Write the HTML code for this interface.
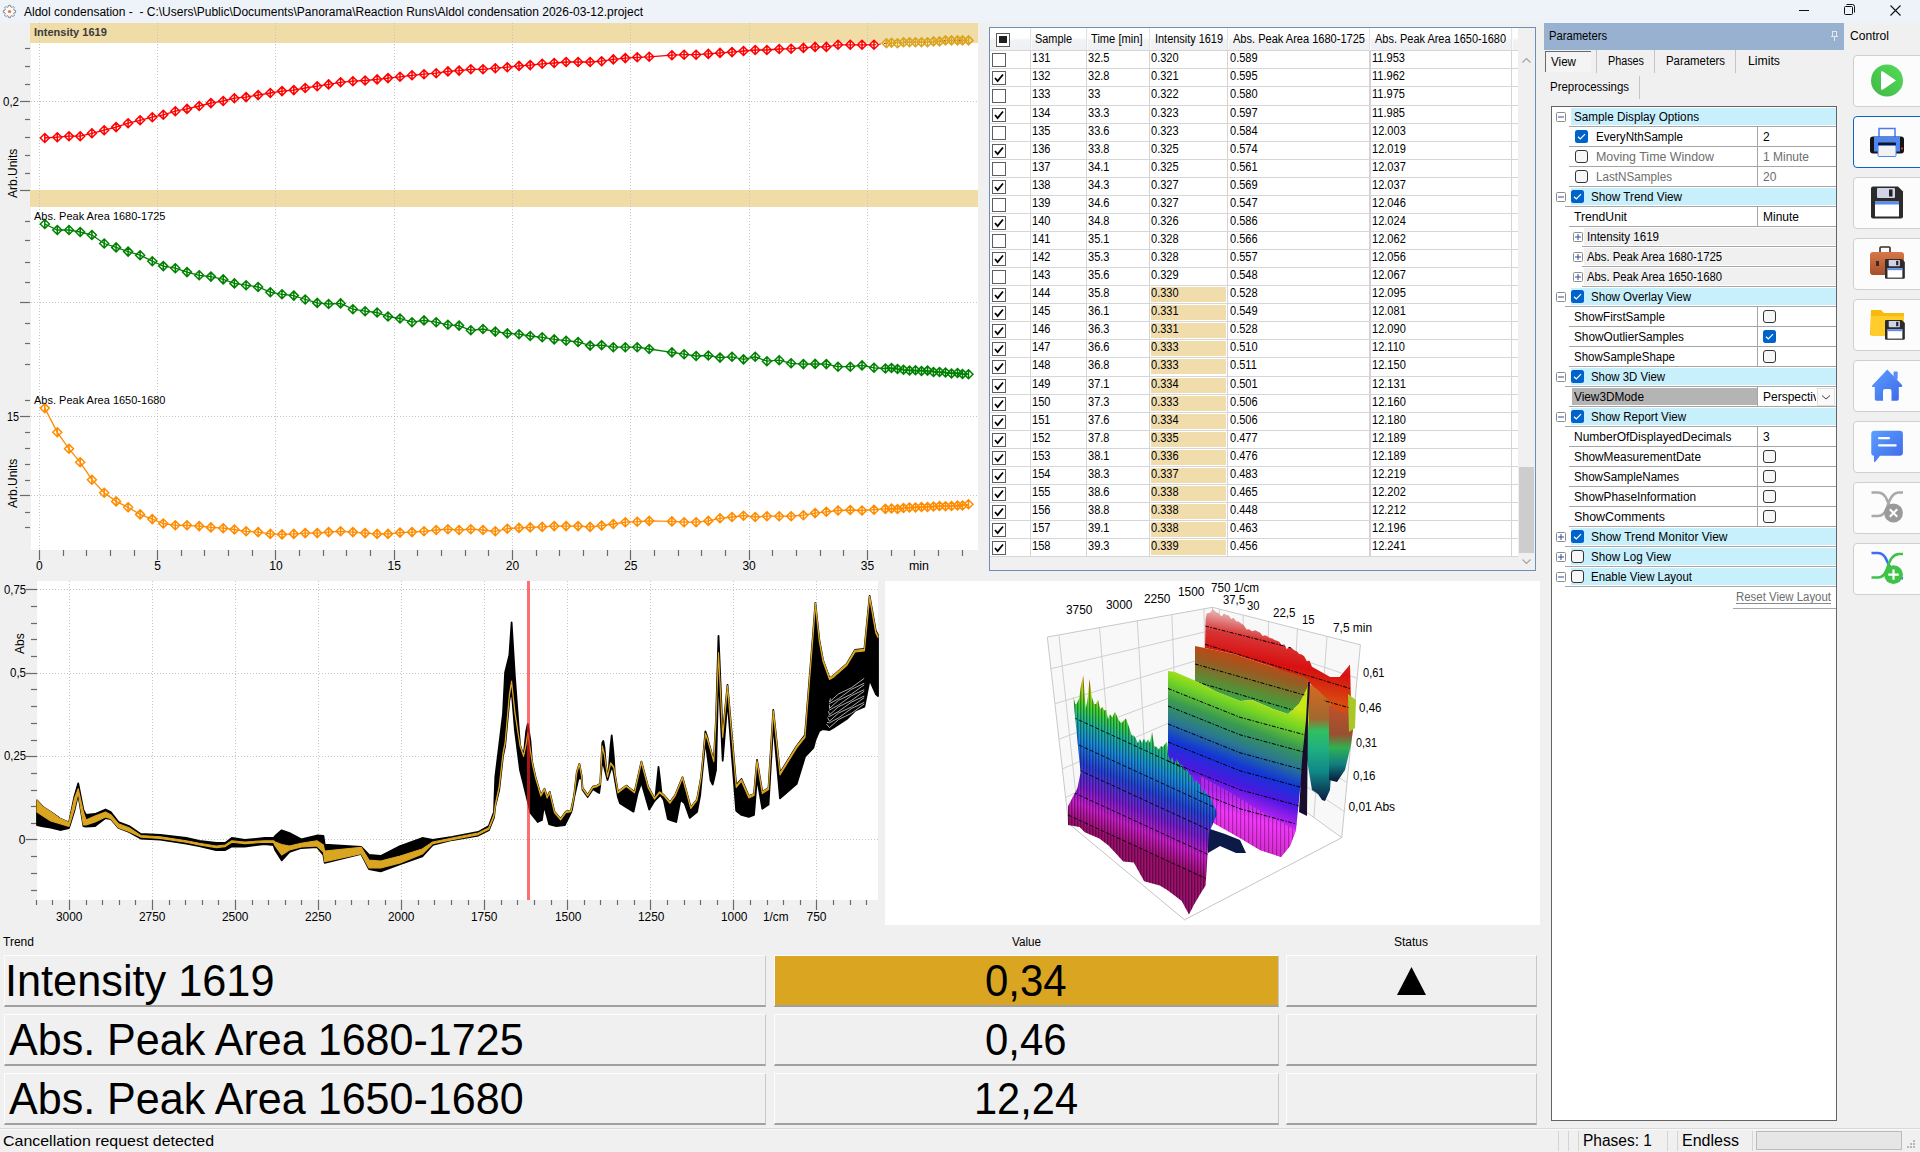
<!DOCTYPE html>
<html><head><meta charset="utf-8"><title>Aldol condensation</title>
<style>
html,body{margin:0;padding:0;width:1920px;height:1152px;overflow:hidden;background:#f0f0f0;font-family:"Liberation Sans",sans-serif;}
.b{position:absolute;}
.t{position:absolute;white-space:pre;line-height:1;font-family:"Liberation Sans",sans-serif;}
svg.b{overflow:visible;}
</style></head><body>
<div class="b" style="left:0.00px;top:0.00px;width:1920.00px;height:23.00px;background:#eef2f9"></div><svg class="b" style="left:2px;top:3.5px" width="15" height="15" viewBox="0 0 15 15"><path d="M13.60 6.39 L13.60 8.61 L12.29 8.53 L11.62 10.16 L12.60 11.03 L11.03 12.60 L10.16 11.62 L8.53 12.29 L8.61 13.60 L6.39 13.60 L6.47 12.29 L4.84 11.62 L3.97 12.60 L2.40 11.03 L3.38 10.16 L2.71 8.53 L1.40 8.61 L1.40 6.39 L2.71 6.47 L3.38 4.84 L2.40 3.97 L3.97 2.40 L4.84 3.38 L6.47 2.71 L6.39 1.40 L8.61 1.40 L8.53 2.71 L10.16 3.38 L11.03 2.40 L12.60 3.97 L11.62 4.84 L12.29 6.47 Z" fill="#fafafa" stroke="#8a8a8a" stroke-width="1"/><circle cx="7.5" cy="7.5" r="1.6" fill="#e8703a"/></svg><div class="t" style="left:24.00px;top:5.84px;font-size:12.00px;color:#000;">Aldol condensation -  - C:\Users\Public\Documents\Panorama\Reaction Runs\Aldol condensation 2026-03-12.project</div><svg class="b" style="left:1790px;top:0px" width="130" height="23" viewBox="0 0 130 23"><line x1="9" y1="10.5" x2="19" y2="10.5" stroke="#111" stroke-width="1"/><rect x="54.5" y="6.5" width="8" height="8" rx="1" fill="none" stroke="#111" stroke-width="1"/><path d="M56.5 4.5 h6 a2 2 0 0 1 2 2 v6" fill="none" stroke="#111" stroke-width="1"/><path d="M100.5 5.5 L110.5 15.5 M110.5 5.5 L100.5 15.5" stroke="#111" stroke-width="1.1"/></svg>
<div class="b" style="left:31.00px;top:23.00px;width:947.00px;height:527.00px;background:#fff"></div><div class="b" style="left:30.00px;top:23.00px;width:948.00px;height:20.00px;background:#f0dca7"></div><div class="b" style="left:30.00px;top:190.00px;width:948.00px;height:17.00px;background:#f0dca7"></div><svg class="b" style="left:0;top:0" width="980" height="580"><line x1="39.5" y1="23" x2="39.5" y2="550" stroke="#c4c4c4" stroke-width="1" stroke-dasharray="1 2"/><line x1="157.5" y1="23" x2="157.5" y2="550" stroke="#c4c4c4" stroke-width="1" stroke-dasharray="1 2"/><line x1="275.5" y1="23" x2="275.5" y2="550" stroke="#c4c4c4" stroke-width="1" stroke-dasharray="1 2"/><line x1="394.5" y1="23" x2="394.5" y2="550" stroke="#c4c4c4" stroke-width="1" stroke-dasharray="1 2"/><line x1="512.5" y1="23" x2="512.5" y2="550" stroke="#c4c4c4" stroke-width="1" stroke-dasharray="1 2"/><line x1="630.5" y1="23" x2="630.5" y2="550" stroke="#c4c4c4" stroke-width="1" stroke-dasharray="1 2"/><line x1="749.5" y1="23" x2="749.5" y2="550" stroke="#c4c4c4" stroke-width="1" stroke-dasharray="1 2"/><line x1="867.5" y1="23" x2="867.5" y2="550" stroke="#c4c4c4" stroke-width="1" stroke-dasharray="1 2"/><line x1="31" y1="101.5" x2="978" y2="101.5" stroke="#c4c4c4" stroke-width="1" stroke-dasharray="1 2"/><line x1="31" y1="302.5" x2="978" y2="302.5" stroke="#c4c4c4" stroke-width="1" stroke-dasharray="1 2"/><line x1="31" y1="416.5" x2="978" y2="416.5" stroke="#c4c4c4" stroke-width="1" stroke-dasharray="1 2"/><line x1="31" y1="495.5" x2="978" y2="495.5" stroke="#c4c4c4" stroke-width="1" stroke-dasharray="1 2"/><line x1="25" y1="48.5" x2="30" y2="48.5" stroke="#6a6a6a" stroke-width="1.2"/><line x1="25" y1="66.5" x2="30" y2="66.5" stroke="#6a6a6a" stroke-width="1.2"/><line x1="25" y1="84.5" x2="30" y2="84.5" stroke="#6a6a6a" stroke-width="1.2"/><line x1="25" y1="119.5" x2="30" y2="119.5" stroke="#6a6a6a" stroke-width="1.2"/><line x1="25" y1="137.5" x2="30" y2="137.5" stroke="#6a6a6a" stroke-width="1.2"/><line x1="25" y1="155.5" x2="30" y2="155.5" stroke="#6a6a6a" stroke-width="1.2"/><line x1="25" y1="173.5" x2="30" y2="173.5" stroke="#6a6a6a" stroke-width="1.2"/><line x1="25" y1="221.5" x2="30" y2="221.5" stroke="#6a6a6a" stroke-width="1.2"/><line x1="25" y1="240.5" x2="30" y2="240.5" stroke="#6a6a6a" stroke-width="1.2"/><line x1="25" y1="262.5" x2="30" y2="262.5" stroke="#6a6a6a" stroke-width="1.2"/><line x1="25" y1="282.5" x2="30" y2="282.5" stroke="#6a6a6a" stroke-width="1.2"/><line x1="25" y1="323.5" x2="30" y2="323.5" stroke="#6a6a6a" stroke-width="1.2"/><line x1="25" y1="343.5" x2="30" y2="343.5" stroke="#6a6a6a" stroke-width="1.2"/><line x1="25" y1="364.5" x2="30" y2="364.5" stroke="#6a6a6a" stroke-width="1.2"/><line x1="25" y1="400.5" x2="30" y2="400.5" stroke="#6a6a6a" stroke-width="1.2"/><line x1="25" y1="432.5" x2="30" y2="432.5" stroke="#6a6a6a" stroke-width="1.2"/><line x1="25" y1="448.5" x2="30" y2="448.5" stroke="#6a6a6a" stroke-width="1.2"/><line x1="25" y1="464.5" x2="30" y2="464.5" stroke="#6a6a6a" stroke-width="1.2"/><line x1="25" y1="480.5" x2="30" y2="480.5" stroke="#6a6a6a" stroke-width="1.2"/><line x1="25" y1="512.5" x2="30" y2="512.5" stroke="#6a6a6a" stroke-width="1.2"/><line x1="25" y1="527.5" x2="30" y2="527.5" stroke="#6a6a6a" stroke-width="1.2"/><line x1="20" y1="101.5" x2="30" y2="101.5" stroke="#6a6a6a" stroke-width="1.2"/><line x1="20" y1="190.5" x2="30" y2="190.5" stroke="#6a6a6a" stroke-width="1.2"/><line x1="20" y1="302.5" x2="30" y2="302.5" stroke="#6a6a6a" stroke-width="1.2"/><line x1="20" y1="416.5" x2="30" y2="416.5" stroke="#6a6a6a" stroke-width="1.2"/><line x1="20" y1="495.5" x2="30" y2="495.5" stroke="#6a6a6a" stroke-width="1.2"/><line x1="39.5" y1="550" x2="39.5" y2="560" stroke="#6a6a6a" stroke-width="1.2"/><line x1="63.5" y1="550" x2="63.5" y2="556" stroke="#6a6a6a" stroke-width="1.2"/><line x1="86.5" y1="550" x2="86.5" y2="556" stroke="#6a6a6a" stroke-width="1.2"/><line x1="110.5" y1="550" x2="110.5" y2="556" stroke="#6a6a6a" stroke-width="1.2"/><line x1="134.5" y1="550" x2="134.5" y2="556" stroke="#6a6a6a" stroke-width="1.2"/><line x1="157.5" y1="550" x2="157.5" y2="560" stroke="#6a6a6a" stroke-width="1.2"/><line x1="181.5" y1="550" x2="181.5" y2="556" stroke="#6a6a6a" stroke-width="1.2"/><line x1="204.5" y1="550" x2="204.5" y2="556" stroke="#6a6a6a" stroke-width="1.2"/><line x1="228.5" y1="550" x2="228.5" y2="556" stroke="#6a6a6a" stroke-width="1.2"/><line x1="252.5" y1="550" x2="252.5" y2="556" stroke="#6a6a6a" stroke-width="1.2"/><line x1="275.5" y1="550" x2="275.5" y2="560" stroke="#6a6a6a" stroke-width="1.2"/><line x1="299.5" y1="550" x2="299.5" y2="556" stroke="#6a6a6a" stroke-width="1.2"/><line x1="323.5" y1="550" x2="323.5" y2="556" stroke="#6a6a6a" stroke-width="1.2"/><line x1="346.5" y1="550" x2="346.5" y2="556" stroke="#6a6a6a" stroke-width="1.2"/><line x1="370.5" y1="550" x2="370.5" y2="556" stroke="#6a6a6a" stroke-width="1.2"/><line x1="394.5" y1="550" x2="394.5" y2="560" stroke="#6a6a6a" stroke-width="1.2"/><line x1="417.5" y1="550" x2="417.5" y2="556" stroke="#6a6a6a" stroke-width="1.2"/><line x1="441.5" y1="550" x2="441.5" y2="556" stroke="#6a6a6a" stroke-width="1.2"/><line x1="465.5" y1="550" x2="465.5" y2="556" stroke="#6a6a6a" stroke-width="1.2"/><line x1="488.5" y1="550" x2="488.5" y2="556" stroke="#6a6a6a" stroke-width="1.2"/><line x1="512.5" y1="550" x2="512.5" y2="560" stroke="#6a6a6a" stroke-width="1.2"/><line x1="536.5" y1="550" x2="536.5" y2="556" stroke="#6a6a6a" stroke-width="1.2"/><line x1="559.5" y1="550" x2="559.5" y2="556" stroke="#6a6a6a" stroke-width="1.2"/><line x1="583.5" y1="550" x2="583.5" y2="556" stroke="#6a6a6a" stroke-width="1.2"/><line x1="607.5" y1="550" x2="607.5" y2="556" stroke="#6a6a6a" stroke-width="1.2"/><line x1="630.5" y1="550" x2="630.5" y2="560" stroke="#6a6a6a" stroke-width="1.2"/><line x1="654.5" y1="550" x2="654.5" y2="556" stroke="#6a6a6a" stroke-width="1.2"/><line x1="678.5" y1="550" x2="678.5" y2="556" stroke="#6a6a6a" stroke-width="1.2"/><line x1="701.5" y1="550" x2="701.5" y2="556" stroke="#6a6a6a" stroke-width="1.2"/><line x1="725.5" y1="550" x2="725.5" y2="556" stroke="#6a6a6a" stroke-width="1.2"/><line x1="749.5" y1="550" x2="749.5" y2="560" stroke="#6a6a6a" stroke-width="1.2"/><line x1="772.5" y1="550" x2="772.5" y2="556" stroke="#6a6a6a" stroke-width="1.2"/><line x1="796.5" y1="550" x2="796.5" y2="556" stroke="#6a6a6a" stroke-width="1.2"/><line x1="820.5" y1="550" x2="820.5" y2="556" stroke="#6a6a6a" stroke-width="1.2"/><line x1="843.5" y1="550" x2="843.5" y2="556" stroke="#6a6a6a" stroke-width="1.2"/><line x1="867.5" y1="550" x2="867.5" y2="560" stroke="#6a6a6a" stroke-width="1.2"/><line x1="891.5" y1="550" x2="891.5" y2="556" stroke="#6a6a6a" stroke-width="1.2"/><line x1="914.5" y1="550" x2="914.5" y2="556" stroke="#6a6a6a" stroke-width="1.2"/><line x1="938.5" y1="550" x2="938.5" y2="556" stroke="#6a6a6a" stroke-width="1.2"/><line x1="962.5" y1="550" x2="962.5" y2="556" stroke="#6a6a6a" stroke-width="1.2"/><polyline points="44.8,138.0 57.3,137.2 69.0,136.2 80.2,136.2 91.9,133.3 104.2,130.2 116.1,127.1 128.1,123.2 140.1,120.3 152.3,117.2 163.3,114.8 175.3,111.2 187.0,108.9 199.2,106.0 210.9,103.1 223.2,101.0 234.4,98.2 246.1,97.1 258.1,95.1 270.3,93.0 282.0,91.1 293.8,90.1 305.2,88.0 317.2,86.2 328.6,84.4 340.6,82.3 352.9,81.2 365.1,80.5 377.1,79.4 388.0,78.1 400.0,76.8 412.0,75.3 424.0,74.2 436.2,73.2 447.9,71.4 459.1,70.6 470.8,69.3 483.0,69.3 495.3,68.2 507.3,67.2 519.0,65.9 530.2,65.1 542.2,63.8 554.2,63.0 566.1,62.0 578.1,62.0 590.1,62.0 601.6,61.2 613.3,59.4 625.3,58.1 637.2,57.3 649.2,56.8 671.9,55.2 684.1,54.7 696.1,54.7 708.3,53.9 720.0,52.9 732.0,52.1 743.5,51.0 755.2,50.0 766.9,50.0 779.2,49.0 791.1,48.7 803.4,47.9 815.1,46.9 826.3,46.9 838.0,44.8 850.3,44.8 862.0,44.8 874.0,44.8" fill="none" stroke="#ff0000" stroke-width="1.3"/><path d="M44.8 133.5 l4.5 4.5 l-4.5 4.5 l-4.5 -4.5 z M44.8 133.5 v9" fill="none" stroke="#ff0000" stroke-width="1.5"/><path d="M57.3 132.7 l4.5 4.5 l-4.5 4.5 l-4.5 -4.5 z M57.3 132.7 v9" fill="none" stroke="#ff0000" stroke-width="1.5"/><path d="M69.0 131.7 l4.5 4.5 l-4.5 4.5 l-4.5 -4.5 z M69.0 131.7 v9" fill="none" stroke="#ff0000" stroke-width="1.5"/><path d="M80.2 131.7 l4.5 4.5 l-4.5 4.5 l-4.5 -4.5 z M80.2 131.7 v9" fill="none" stroke="#ff0000" stroke-width="1.5"/><path d="M91.9 128.8 l4.5 4.5 l-4.5 4.5 l-4.5 -4.5 z M91.9 128.8 v9" fill="none" stroke="#ff0000" stroke-width="1.5"/><path d="M104.2 125.7 l4.5 4.5 l-4.5 4.5 l-4.5 -4.5 z M104.2 125.7 v9" fill="none" stroke="#ff0000" stroke-width="1.5"/><path d="M116.1 122.6 l4.5 4.5 l-4.5 4.5 l-4.5 -4.5 z M116.1 122.6 v9" fill="none" stroke="#ff0000" stroke-width="1.5"/><path d="M128.1 118.7 l4.5 4.5 l-4.5 4.5 l-4.5 -4.5 z M128.1 118.7 v9" fill="none" stroke="#ff0000" stroke-width="1.5"/><path d="M140.1 115.8 l4.5 4.5 l-4.5 4.5 l-4.5 -4.5 z M140.1 115.8 v9" fill="none" stroke="#ff0000" stroke-width="1.5"/><path d="M152.3 112.7 l4.5 4.5 l-4.5 4.5 l-4.5 -4.5 z M152.3 112.7 v9" fill="none" stroke="#ff0000" stroke-width="1.5"/><path d="M163.3 110.3 l4.5 4.5 l-4.5 4.5 l-4.5 -4.5 z M163.3 110.3 v9" fill="none" stroke="#ff0000" stroke-width="1.5"/><path d="M175.3 106.7 l4.5 4.5 l-4.5 4.5 l-4.5 -4.5 z M175.3 106.7 v9" fill="none" stroke="#ff0000" stroke-width="1.5"/><path d="M187.0 104.4 l4.5 4.5 l-4.5 4.5 l-4.5 -4.5 z M187.0 104.4 v9" fill="none" stroke="#ff0000" stroke-width="1.5"/><path d="M199.2 101.5 l4.5 4.5 l-4.5 4.5 l-4.5 -4.5 z M199.2 101.5 v9" fill="none" stroke="#ff0000" stroke-width="1.5"/><path d="M210.9 98.6 l4.5 4.5 l-4.5 4.5 l-4.5 -4.5 z M210.9 98.6 v9" fill="none" stroke="#ff0000" stroke-width="1.5"/><path d="M223.2 96.5 l4.5 4.5 l-4.5 4.5 l-4.5 -4.5 z M223.2 96.5 v9" fill="none" stroke="#ff0000" stroke-width="1.5"/><path d="M234.4 93.7 l4.5 4.5 l-4.5 4.5 l-4.5 -4.5 z M234.4 93.7 v9" fill="none" stroke="#ff0000" stroke-width="1.5"/><path d="M246.1 92.6 l4.5 4.5 l-4.5 4.5 l-4.5 -4.5 z M246.1 92.6 v9" fill="none" stroke="#ff0000" stroke-width="1.5"/><path d="M258.1 90.6 l4.5 4.5 l-4.5 4.5 l-4.5 -4.5 z M258.1 90.6 v9" fill="none" stroke="#ff0000" stroke-width="1.5"/><path d="M270.3 88.5 l4.5 4.5 l-4.5 4.5 l-4.5 -4.5 z M270.3 88.5 v9" fill="none" stroke="#ff0000" stroke-width="1.5"/><path d="M282.0 86.6 l4.5 4.5 l-4.5 4.5 l-4.5 -4.5 z M282.0 86.6 v9" fill="none" stroke="#ff0000" stroke-width="1.5"/><path d="M293.8 85.6 l4.5 4.5 l-4.5 4.5 l-4.5 -4.5 z M293.8 85.6 v9" fill="none" stroke="#ff0000" stroke-width="1.5"/><path d="M305.2 83.5 l4.5 4.5 l-4.5 4.5 l-4.5 -4.5 z M305.2 83.5 v9" fill="none" stroke="#ff0000" stroke-width="1.5"/><path d="M317.2 81.7 l4.5 4.5 l-4.5 4.5 l-4.5 -4.5 z M317.2 81.7 v9" fill="none" stroke="#ff0000" stroke-width="1.5"/><path d="M328.6 79.9 l4.5 4.5 l-4.5 4.5 l-4.5 -4.5 z M328.6 79.9 v9" fill="none" stroke="#ff0000" stroke-width="1.5"/><path d="M340.6 77.8 l4.5 4.5 l-4.5 4.5 l-4.5 -4.5 z M340.6 77.8 v9" fill="none" stroke="#ff0000" stroke-width="1.5"/><path d="M352.9 76.8 l4.5 4.5 l-4.5 4.5 l-4.5 -4.5 z M352.9 76.8 v9" fill="none" stroke="#ff0000" stroke-width="1.5"/><path d="M365.1 76.0 l4.5 4.5 l-4.5 4.5 l-4.5 -4.5 z M365.1 76.0 v9" fill="none" stroke="#ff0000" stroke-width="1.5"/><path d="M377.1 74.9 l4.5 4.5 l-4.5 4.5 l-4.5 -4.5 z M377.1 74.9 v9" fill="none" stroke="#ff0000" stroke-width="1.5"/><path d="M388.0 73.6 l4.5 4.5 l-4.5 4.5 l-4.5 -4.5 z M388.0 73.6 v9" fill="none" stroke="#ff0000" stroke-width="1.5"/><path d="M400.0 72.3 l4.5 4.5 l-4.5 4.5 l-4.5 -4.5 z M400.0 72.3 v9" fill="none" stroke="#ff0000" stroke-width="1.5"/><path d="M412.0 70.8 l4.5 4.5 l-4.5 4.5 l-4.5 -4.5 z M412.0 70.8 v9" fill="none" stroke="#ff0000" stroke-width="1.5"/><path d="M424.0 69.7 l4.5 4.5 l-4.5 4.5 l-4.5 -4.5 z M424.0 69.7 v9" fill="none" stroke="#ff0000" stroke-width="1.5"/><path d="M436.2 68.7 l4.5 4.5 l-4.5 4.5 l-4.5 -4.5 z M436.2 68.7 v9" fill="none" stroke="#ff0000" stroke-width="1.5"/><path d="M447.9 66.9 l4.5 4.5 l-4.5 4.5 l-4.5 -4.5 z M447.9 66.9 v9" fill="none" stroke="#ff0000" stroke-width="1.5"/><path d="M459.1 66.1 l4.5 4.5 l-4.5 4.5 l-4.5 -4.5 z M459.1 66.1 v9" fill="none" stroke="#ff0000" stroke-width="1.5"/><path d="M470.8 64.8 l4.5 4.5 l-4.5 4.5 l-4.5 -4.5 z M470.8 64.8 v9" fill="none" stroke="#ff0000" stroke-width="1.5"/><path d="M483.0 64.8 l4.5 4.5 l-4.5 4.5 l-4.5 -4.5 z M483.0 64.8 v9" fill="none" stroke="#ff0000" stroke-width="1.5"/><path d="M495.3 63.7 l4.5 4.5 l-4.5 4.5 l-4.5 -4.5 z M495.3 63.7 v9" fill="none" stroke="#ff0000" stroke-width="1.5"/><path d="M507.3 62.7 l4.5 4.5 l-4.5 4.5 l-4.5 -4.5 z M507.3 62.7 v9" fill="none" stroke="#ff0000" stroke-width="1.5"/><path d="M519.0 61.4 l4.5 4.5 l-4.5 4.5 l-4.5 -4.5 z M519.0 61.4 v9" fill="none" stroke="#ff0000" stroke-width="1.5"/><path d="M530.2 60.6 l4.5 4.5 l-4.5 4.5 l-4.5 -4.5 z M530.2 60.6 v9" fill="none" stroke="#ff0000" stroke-width="1.5"/><path d="M542.2 59.3 l4.5 4.5 l-4.5 4.5 l-4.5 -4.5 z M542.2 59.3 v9" fill="none" stroke="#ff0000" stroke-width="1.5"/><path d="M554.2 58.5 l4.5 4.5 l-4.5 4.5 l-4.5 -4.5 z M554.2 58.5 v9" fill="none" stroke="#ff0000" stroke-width="1.5"/><path d="M566.1 57.5 l4.5 4.5 l-4.5 4.5 l-4.5 -4.5 z M566.1 57.5 v9" fill="none" stroke="#ff0000" stroke-width="1.5"/><path d="M578.1 57.5 l4.5 4.5 l-4.5 4.5 l-4.5 -4.5 z M578.1 57.5 v9" fill="none" stroke="#ff0000" stroke-width="1.5"/><path d="M590.1 57.5 l4.5 4.5 l-4.5 4.5 l-4.5 -4.5 z M590.1 57.5 v9" fill="none" stroke="#ff0000" stroke-width="1.5"/><path d="M601.6 56.7 l4.5 4.5 l-4.5 4.5 l-4.5 -4.5 z M601.6 56.7 v9" fill="none" stroke="#ff0000" stroke-width="1.5"/><path d="M613.3 54.9 l4.5 4.5 l-4.5 4.5 l-4.5 -4.5 z M613.3 54.9 v9" fill="none" stroke="#ff0000" stroke-width="1.5"/><path d="M625.3 53.6 l4.5 4.5 l-4.5 4.5 l-4.5 -4.5 z M625.3 53.6 v9" fill="none" stroke="#ff0000" stroke-width="1.5"/><path d="M637.2 52.8 l4.5 4.5 l-4.5 4.5 l-4.5 -4.5 z M637.2 52.8 v9" fill="none" stroke="#ff0000" stroke-width="1.5"/><path d="M649.2 52.3 l4.5 4.5 l-4.5 4.5 l-4.5 -4.5 z M649.2 52.3 v9" fill="none" stroke="#ff0000" stroke-width="1.5"/><path d="M671.9 50.7 l4.5 4.5 l-4.5 4.5 l-4.5 -4.5 z M671.9 50.7 v9" fill="none" stroke="#ff0000" stroke-width="1.5"/><path d="M684.1 50.2 l4.5 4.5 l-4.5 4.5 l-4.5 -4.5 z M684.1 50.2 v9" fill="none" stroke="#ff0000" stroke-width="1.5"/><path d="M696.1 50.2 l4.5 4.5 l-4.5 4.5 l-4.5 -4.5 z M696.1 50.2 v9" fill="none" stroke="#ff0000" stroke-width="1.5"/><path d="M708.3 49.4 l4.5 4.5 l-4.5 4.5 l-4.5 -4.5 z M708.3 49.4 v9" fill="none" stroke="#ff0000" stroke-width="1.5"/><path d="M720.0 48.4 l4.5 4.5 l-4.5 4.5 l-4.5 -4.5 z M720.0 48.4 v9" fill="none" stroke="#ff0000" stroke-width="1.5"/><path d="M732.0 47.6 l4.5 4.5 l-4.5 4.5 l-4.5 -4.5 z M732.0 47.6 v9" fill="none" stroke="#ff0000" stroke-width="1.5"/><path d="M743.5 46.5 l4.5 4.5 l-4.5 4.5 l-4.5 -4.5 z M743.5 46.5 v9" fill="none" stroke="#ff0000" stroke-width="1.5"/><path d="M755.2 45.5 l4.5 4.5 l-4.5 4.5 l-4.5 -4.5 z M755.2 45.5 v9" fill="none" stroke="#ff0000" stroke-width="1.5"/><path d="M766.9 45.5 l4.5 4.5 l-4.5 4.5 l-4.5 -4.5 z M766.9 45.5 v9" fill="none" stroke="#ff0000" stroke-width="1.5"/><path d="M779.2 44.5 l4.5 4.5 l-4.5 4.5 l-4.5 -4.5 z M779.2 44.5 v9" fill="none" stroke="#ff0000" stroke-width="1.5"/><path d="M791.1 44.2 l4.5 4.5 l-4.5 4.5 l-4.5 -4.5 z M791.1 44.2 v9" fill="none" stroke="#ff0000" stroke-width="1.5"/><path d="M803.4 43.4 l4.5 4.5 l-4.5 4.5 l-4.5 -4.5 z M803.4 43.4 v9" fill="none" stroke="#ff0000" stroke-width="1.5"/><path d="M815.1 42.4 l4.5 4.5 l-4.5 4.5 l-4.5 -4.5 z M815.1 42.4 v9" fill="none" stroke="#ff0000" stroke-width="1.5"/><path d="M826.3 42.4 l4.5 4.5 l-4.5 4.5 l-4.5 -4.5 z M826.3 42.4 v9" fill="none" stroke="#ff0000" stroke-width="1.5"/><path d="M838.0 40.3 l4.5 4.5 l-4.5 4.5 l-4.5 -4.5 z M838.0 40.3 v9" fill="none" stroke="#ff0000" stroke-width="1.5"/><path d="M850.3 40.3 l4.5 4.5 l-4.5 4.5 l-4.5 -4.5 z M850.3 40.3 v9" fill="none" stroke="#ff0000" stroke-width="1.5"/><path d="M862.0 40.3 l4.5 4.5 l-4.5 4.5 l-4.5 -4.5 z M862.0 40.3 v9" fill="none" stroke="#ff0000" stroke-width="1.5"/><path d="M874.0 40.3 l4.5 4.5 l-4.5 4.5 l-4.5 -4.5 z M874.0 40.3 v9" fill="none" stroke="#ff0000" stroke-width="1.5"/><polyline points="44.8,224.0 57.3,230.0 69.0,230.0 80.2,232.0 91.9,235.0 104.2,243.5 116.1,247.4 128.1,251.6 140.1,255.2 152.3,261.2 163.3,266.1 175.3,268.2 187.0,272.1 199.2,275.3 210.9,276.6 223.2,279.4 234.4,283.4 246.1,285.2 258.1,287.0 270.3,292.2 282.0,294.3 293.8,295.6 305.2,299.5 317.2,302.9 328.6,304.0 340.6,303.4 352.9,309.2 365.1,311.2 377.1,312.5 388.0,316.5 400.0,318.5 412.0,322.2 424.0,320.4 436.2,322.2 447.9,324.8 459.1,325.6 470.8,330.3 483.0,329.0 495.3,331.6 507.3,333.4 519.0,334.2 530.2,336.0 542.2,337.3 554.2,339.4 566.1,340.7 578.1,342.0 590.1,345.6 601.6,345.1 613.3,347.2 625.3,347.2 637.2,347.2 649.2,349.0 671.9,352.4 684.1,354.2 696.1,356.0 708.3,355.5 720.0,357.6 732.0,356.8 743.5,359.4 755.2,356.8 766.9,361.2 779.2,360.2 791.1,363.3 803.4,364.1 815.1,363.9 826.3,364.1 838.0,366.7 850.3,366.7 862.0,365.4 874.0,367.8 885.4,368.5 891.5,368.0 897.5,369.0 903.5,369.8 909.5,370.5 915.5,370.3 921.5,371.0 927.5,370.6 933.5,372.0 939.5,372.0 945.5,372.5 951.5,373.5 957.5,373.0 962.5,374.0 968.5,374.3" fill="none" stroke="#008000" stroke-width="1.3"/><path d="M44.8 219.5 l4.5 4.5 l-4.5 4.5 l-4.5 -4.5 z M44.8 219.5 v9" fill="none" stroke="#008000" stroke-width="1.5"/><path d="M57.3 225.5 l4.5 4.5 l-4.5 4.5 l-4.5 -4.5 z M57.3 225.5 v9" fill="none" stroke="#008000" stroke-width="1.5"/><path d="M69.0 225.5 l4.5 4.5 l-4.5 4.5 l-4.5 -4.5 z M69.0 225.5 v9" fill="none" stroke="#008000" stroke-width="1.5"/><path d="M80.2 227.5 l4.5 4.5 l-4.5 4.5 l-4.5 -4.5 z M80.2 227.5 v9" fill="none" stroke="#008000" stroke-width="1.5"/><path d="M91.9 230.5 l4.5 4.5 l-4.5 4.5 l-4.5 -4.5 z M91.9 230.5 v9" fill="none" stroke="#008000" stroke-width="1.5"/><path d="M104.2 239.0 l4.5 4.5 l-4.5 4.5 l-4.5 -4.5 z M104.2 239.0 v9" fill="none" stroke="#008000" stroke-width="1.5"/><path d="M116.1 242.9 l4.5 4.5 l-4.5 4.5 l-4.5 -4.5 z M116.1 242.9 v9" fill="none" stroke="#008000" stroke-width="1.5"/><path d="M128.1 247.1 l4.5 4.5 l-4.5 4.5 l-4.5 -4.5 z M128.1 247.1 v9" fill="none" stroke="#008000" stroke-width="1.5"/><path d="M140.1 250.7 l4.5 4.5 l-4.5 4.5 l-4.5 -4.5 z M140.1 250.7 v9" fill="none" stroke="#008000" stroke-width="1.5"/><path d="M152.3 256.7 l4.5 4.5 l-4.5 4.5 l-4.5 -4.5 z M152.3 256.7 v9" fill="none" stroke="#008000" stroke-width="1.5"/><path d="M163.3 261.6 l4.5 4.5 l-4.5 4.5 l-4.5 -4.5 z M163.3 261.6 v9" fill="none" stroke="#008000" stroke-width="1.5"/><path d="M175.3 263.7 l4.5 4.5 l-4.5 4.5 l-4.5 -4.5 z M175.3 263.7 v9" fill="none" stroke="#008000" stroke-width="1.5"/><path d="M187.0 267.6 l4.5 4.5 l-4.5 4.5 l-4.5 -4.5 z M187.0 267.6 v9" fill="none" stroke="#008000" stroke-width="1.5"/><path d="M199.2 270.8 l4.5 4.5 l-4.5 4.5 l-4.5 -4.5 z M199.2 270.8 v9" fill="none" stroke="#008000" stroke-width="1.5"/><path d="M210.9 272.1 l4.5 4.5 l-4.5 4.5 l-4.5 -4.5 z M210.9 272.1 v9" fill="none" stroke="#008000" stroke-width="1.5"/><path d="M223.2 274.9 l4.5 4.5 l-4.5 4.5 l-4.5 -4.5 z M223.2 274.9 v9" fill="none" stroke="#008000" stroke-width="1.5"/><path d="M234.4 278.9 l4.5 4.5 l-4.5 4.5 l-4.5 -4.5 z M234.4 278.9 v9" fill="none" stroke="#008000" stroke-width="1.5"/><path d="M246.1 280.7 l4.5 4.5 l-4.5 4.5 l-4.5 -4.5 z M246.1 280.7 v9" fill="none" stroke="#008000" stroke-width="1.5"/><path d="M258.1 282.5 l4.5 4.5 l-4.5 4.5 l-4.5 -4.5 z M258.1 282.5 v9" fill="none" stroke="#008000" stroke-width="1.5"/><path d="M270.3 287.7 l4.5 4.5 l-4.5 4.5 l-4.5 -4.5 z M270.3 287.7 v9" fill="none" stroke="#008000" stroke-width="1.5"/><path d="M282.0 289.8 l4.5 4.5 l-4.5 4.5 l-4.5 -4.5 z M282.0 289.8 v9" fill="none" stroke="#008000" stroke-width="1.5"/><path d="M293.8 291.1 l4.5 4.5 l-4.5 4.5 l-4.5 -4.5 z M293.8 291.1 v9" fill="none" stroke="#008000" stroke-width="1.5"/><path d="M305.2 295.0 l4.5 4.5 l-4.5 4.5 l-4.5 -4.5 z M305.2 295.0 v9" fill="none" stroke="#008000" stroke-width="1.5"/><path d="M317.2 298.4 l4.5 4.5 l-4.5 4.5 l-4.5 -4.5 z M317.2 298.4 v9" fill="none" stroke="#008000" stroke-width="1.5"/><path d="M328.6 299.5 l4.5 4.5 l-4.5 4.5 l-4.5 -4.5 z M328.6 299.5 v9" fill="none" stroke="#008000" stroke-width="1.5"/><path d="M340.6 298.9 l4.5 4.5 l-4.5 4.5 l-4.5 -4.5 z M340.6 298.9 v9" fill="none" stroke="#008000" stroke-width="1.5"/><path d="M352.9 304.7 l4.5 4.5 l-4.5 4.5 l-4.5 -4.5 z M352.9 304.7 v9" fill="none" stroke="#008000" stroke-width="1.5"/><path d="M365.1 306.8 l4.5 4.5 l-4.5 4.5 l-4.5 -4.5 z M365.1 306.8 v9" fill="none" stroke="#008000" stroke-width="1.5"/><path d="M377.1 308.0 l4.5 4.5 l-4.5 4.5 l-4.5 -4.5 z M377.1 308.0 v9" fill="none" stroke="#008000" stroke-width="1.5"/><path d="M388.0 312.0 l4.5 4.5 l-4.5 4.5 l-4.5 -4.5 z M388.0 312.0 v9" fill="none" stroke="#008000" stroke-width="1.5"/><path d="M400.0 314.0 l4.5 4.5 l-4.5 4.5 l-4.5 -4.5 z M400.0 314.0 v9" fill="none" stroke="#008000" stroke-width="1.5"/><path d="M412.0 317.7 l4.5 4.5 l-4.5 4.5 l-4.5 -4.5 z M412.0 317.7 v9" fill="none" stroke="#008000" stroke-width="1.5"/><path d="M424.0 315.9 l4.5 4.5 l-4.5 4.5 l-4.5 -4.5 z M424.0 315.9 v9" fill="none" stroke="#008000" stroke-width="1.5"/><path d="M436.2 317.7 l4.5 4.5 l-4.5 4.5 l-4.5 -4.5 z M436.2 317.7 v9" fill="none" stroke="#008000" stroke-width="1.5"/><path d="M447.9 320.3 l4.5 4.5 l-4.5 4.5 l-4.5 -4.5 z M447.9 320.3 v9" fill="none" stroke="#008000" stroke-width="1.5"/><path d="M459.1 321.1 l4.5 4.5 l-4.5 4.5 l-4.5 -4.5 z M459.1 321.1 v9" fill="none" stroke="#008000" stroke-width="1.5"/><path d="M470.8 325.8 l4.5 4.5 l-4.5 4.5 l-4.5 -4.5 z M470.8 325.8 v9" fill="none" stroke="#008000" stroke-width="1.5"/><path d="M483.0 324.5 l4.5 4.5 l-4.5 4.5 l-4.5 -4.5 z M483.0 324.5 v9" fill="none" stroke="#008000" stroke-width="1.5"/><path d="M495.3 327.1 l4.5 4.5 l-4.5 4.5 l-4.5 -4.5 z M495.3 327.1 v9" fill="none" stroke="#008000" stroke-width="1.5"/><path d="M507.3 328.9 l4.5 4.5 l-4.5 4.5 l-4.5 -4.5 z M507.3 328.9 v9" fill="none" stroke="#008000" stroke-width="1.5"/><path d="M519.0 329.7 l4.5 4.5 l-4.5 4.5 l-4.5 -4.5 z M519.0 329.7 v9" fill="none" stroke="#008000" stroke-width="1.5"/><path d="M530.2 331.5 l4.5 4.5 l-4.5 4.5 l-4.5 -4.5 z M530.2 331.5 v9" fill="none" stroke="#008000" stroke-width="1.5"/><path d="M542.2 332.8 l4.5 4.5 l-4.5 4.5 l-4.5 -4.5 z M542.2 332.8 v9" fill="none" stroke="#008000" stroke-width="1.5"/><path d="M554.2 334.9 l4.5 4.5 l-4.5 4.5 l-4.5 -4.5 z M554.2 334.9 v9" fill="none" stroke="#008000" stroke-width="1.5"/><path d="M566.1 336.2 l4.5 4.5 l-4.5 4.5 l-4.5 -4.5 z M566.1 336.2 v9" fill="none" stroke="#008000" stroke-width="1.5"/><path d="M578.1 337.5 l4.5 4.5 l-4.5 4.5 l-4.5 -4.5 z M578.1 337.5 v9" fill="none" stroke="#008000" stroke-width="1.5"/><path d="M590.1 341.1 l4.5 4.5 l-4.5 4.5 l-4.5 -4.5 z M590.1 341.1 v9" fill="none" stroke="#008000" stroke-width="1.5"/><path d="M601.6 340.6 l4.5 4.5 l-4.5 4.5 l-4.5 -4.5 z M601.6 340.6 v9" fill="none" stroke="#008000" stroke-width="1.5"/><path d="M613.3 342.7 l4.5 4.5 l-4.5 4.5 l-4.5 -4.5 z M613.3 342.7 v9" fill="none" stroke="#008000" stroke-width="1.5"/><path d="M625.3 342.7 l4.5 4.5 l-4.5 4.5 l-4.5 -4.5 z M625.3 342.7 v9" fill="none" stroke="#008000" stroke-width="1.5"/><path d="M637.2 342.7 l4.5 4.5 l-4.5 4.5 l-4.5 -4.5 z M637.2 342.7 v9" fill="none" stroke="#008000" stroke-width="1.5"/><path d="M649.2 344.5 l4.5 4.5 l-4.5 4.5 l-4.5 -4.5 z M649.2 344.5 v9" fill="none" stroke="#008000" stroke-width="1.5"/><path d="M671.9 347.9 l4.5 4.5 l-4.5 4.5 l-4.5 -4.5 z M671.9 347.9 v9" fill="none" stroke="#008000" stroke-width="1.5"/><path d="M684.1 349.7 l4.5 4.5 l-4.5 4.5 l-4.5 -4.5 z M684.1 349.7 v9" fill="none" stroke="#008000" stroke-width="1.5"/><path d="M696.1 351.5 l4.5 4.5 l-4.5 4.5 l-4.5 -4.5 z M696.1 351.5 v9" fill="none" stroke="#008000" stroke-width="1.5"/><path d="M708.3 351.0 l4.5 4.5 l-4.5 4.5 l-4.5 -4.5 z M708.3 351.0 v9" fill="none" stroke="#008000" stroke-width="1.5"/><path d="M720.0 353.1 l4.5 4.5 l-4.5 4.5 l-4.5 -4.5 z M720.0 353.1 v9" fill="none" stroke="#008000" stroke-width="1.5"/><path d="M732.0 352.3 l4.5 4.5 l-4.5 4.5 l-4.5 -4.5 z M732.0 352.3 v9" fill="none" stroke="#008000" stroke-width="1.5"/><path d="M743.5 354.9 l4.5 4.5 l-4.5 4.5 l-4.5 -4.5 z M743.5 354.9 v9" fill="none" stroke="#008000" stroke-width="1.5"/><path d="M755.2 352.3 l4.5 4.5 l-4.5 4.5 l-4.5 -4.5 z M755.2 352.3 v9" fill="none" stroke="#008000" stroke-width="1.5"/><path d="M766.9 356.8 l4.5 4.5 l-4.5 4.5 l-4.5 -4.5 z M766.9 356.8 v9" fill="none" stroke="#008000" stroke-width="1.5"/><path d="M779.2 355.7 l4.5 4.5 l-4.5 4.5 l-4.5 -4.5 z M779.2 355.7 v9" fill="none" stroke="#008000" stroke-width="1.5"/><path d="M791.1 358.8 l4.5 4.5 l-4.5 4.5 l-4.5 -4.5 z M791.1 358.8 v9" fill="none" stroke="#008000" stroke-width="1.5"/><path d="M803.4 359.6 l4.5 4.5 l-4.5 4.5 l-4.5 -4.5 z M803.4 359.6 v9" fill="none" stroke="#008000" stroke-width="1.5"/><path d="M815.1 359.4 l4.5 4.5 l-4.5 4.5 l-4.5 -4.5 z M815.1 359.4 v9" fill="none" stroke="#008000" stroke-width="1.5"/><path d="M826.3 359.6 l4.5 4.5 l-4.5 4.5 l-4.5 -4.5 z M826.3 359.6 v9" fill="none" stroke="#008000" stroke-width="1.5"/><path d="M838.0 362.2 l4.5 4.5 l-4.5 4.5 l-4.5 -4.5 z M838.0 362.2 v9" fill="none" stroke="#008000" stroke-width="1.5"/><path d="M850.3 362.2 l4.5 4.5 l-4.5 4.5 l-4.5 -4.5 z M850.3 362.2 v9" fill="none" stroke="#008000" stroke-width="1.5"/><path d="M862.0 360.9 l4.5 4.5 l-4.5 4.5 l-4.5 -4.5 z M862.0 360.9 v9" fill="none" stroke="#008000" stroke-width="1.5"/><path d="M874.0 363.3 l4.5 4.5 l-4.5 4.5 l-4.5 -4.5 z M874.0 363.3 v9" fill="none" stroke="#008000" stroke-width="1.5"/><path d="M885.4 364.0 l4.5 4.5 l-4.5 4.5 l-4.5 -4.5 z M885.4 364.0 v9" fill="none" stroke="#008000" stroke-width="1.5"/><path d="M891.5 363.5 l4.5 4.5 l-4.5 4.5 l-4.5 -4.5 z M891.5 363.5 v9" fill="none" stroke="#008000" stroke-width="1.5"/><path d="M897.5 364.5 l4.5 4.5 l-4.5 4.5 l-4.5 -4.5 z M897.5 364.5 v9" fill="none" stroke="#008000" stroke-width="1.5"/><path d="M903.5 365.3 l4.5 4.5 l-4.5 4.5 l-4.5 -4.5 z M903.5 365.3 v9" fill="none" stroke="#008000" stroke-width="1.5"/><path d="M909.5 366.0 l4.5 4.5 l-4.5 4.5 l-4.5 -4.5 z M909.5 366.0 v9" fill="none" stroke="#008000" stroke-width="1.5"/><path d="M915.5 365.8 l4.5 4.5 l-4.5 4.5 l-4.5 -4.5 z M915.5 365.8 v9" fill="none" stroke="#008000" stroke-width="1.5"/><path d="M921.5 366.5 l4.5 4.5 l-4.5 4.5 l-4.5 -4.5 z M921.5 366.5 v9" fill="none" stroke="#008000" stroke-width="1.5"/><path d="M927.5 366.1 l4.5 4.5 l-4.5 4.5 l-4.5 -4.5 z M927.5 366.1 v9" fill="none" stroke="#008000" stroke-width="1.5"/><path d="M933.5 367.5 l4.5 4.5 l-4.5 4.5 l-4.5 -4.5 z M933.5 367.5 v9" fill="none" stroke="#008000" stroke-width="1.5"/><path d="M939.5 367.5 l4.5 4.5 l-4.5 4.5 l-4.5 -4.5 z M939.5 367.5 v9" fill="none" stroke="#008000" stroke-width="1.5"/><path d="M945.5 368.0 l4.5 4.5 l-4.5 4.5 l-4.5 -4.5 z M945.5 368.0 v9" fill="none" stroke="#008000" stroke-width="1.5"/><path d="M951.5 369.0 l4.5 4.5 l-4.5 4.5 l-4.5 -4.5 z M951.5 369.0 v9" fill="none" stroke="#008000" stroke-width="1.5"/><path d="M957.5 368.5 l4.5 4.5 l-4.5 4.5 l-4.5 -4.5 z M957.5 368.5 v9" fill="none" stroke="#008000" stroke-width="1.5"/><path d="M962.5 369.5 l4.5 4.5 l-4.5 4.5 l-4.5 -4.5 z M962.5 369.5 v9" fill="none" stroke="#008000" stroke-width="1.5"/><path d="M968.5 369.8 l4.5 4.5 l-4.5 4.5 l-4.5 -4.5 z M968.5 369.8 v9" fill="none" stroke="#008000" stroke-width="1.5"/><polyline points="44.8,408.1 57.3,432.3 69.0,448.8 80.2,462.3 91.9,479.7 104.2,492.8 116.1,501.4 128.1,507.3 140.1,514.4 152.3,519.1 163.3,523.5 175.3,525.3 187.0,525.3 199.2,526.1 210.9,527.4 223.2,528.2 234.4,529.5 246.1,531.3 258.1,532.1 270.3,533.9 282.0,534.4 293.8,533.9 305.2,533.1 317.2,533.1 328.6,532.1 340.6,531.3 352.9,532.1 365.1,533.1 377.1,533.9 388.0,533.9 400.0,532.6 412.0,532.1 424.0,531.3 436.2,530.0 447.9,529.2 459.1,530.0 470.8,529.2 483.0,530.0 495.3,531.3 507.3,528.7 519.0,527.9 530.2,527.4 542.2,526.9 554.2,526.1 566.1,526.1 578.1,526.1 590.1,526.9 601.6,525.6 613.3,524.0 625.3,522.2 637.2,521.7 649.2,520.9 671.9,521.4 684.1,522.2 696.1,522.2 708.3,520.9 720.0,518.3 732.0,517.0 743.5,515.7 755.2,517.0 766.9,516.2 779.2,516.2 791.1,516.2 803.4,515.2 815.1,513.1 826.3,511.8 838.0,510.5 850.3,510.0 862.0,510.5 874.0,509.7 885.4,508.9 891.5,508.5 897.5,509.0 903.5,508.0 909.5,507.5 915.5,507.5 921.5,507.0 927.5,507.0 933.5,506.5 939.5,506.0 945.5,506.2 951.5,506.0 957.5,505.5 962.5,505.5 968.5,504.3" fill="none" stroke="#ff8c00" stroke-width="1.3"/><path d="M44.8 403.6 l4.5 4.5 l-4.5 4.5 l-4.5 -4.5 z M44.8 403.6 v9" fill="none" stroke="#ff8c00" stroke-width="1.5"/><path d="M57.3 427.8 l4.5 4.5 l-4.5 4.5 l-4.5 -4.5 z M57.3 427.8 v9" fill="none" stroke="#ff8c00" stroke-width="1.5"/><path d="M69.0 444.2 l4.5 4.5 l-4.5 4.5 l-4.5 -4.5 z M69.0 444.2 v9" fill="none" stroke="#ff8c00" stroke-width="1.5"/><path d="M80.2 457.8 l4.5 4.5 l-4.5 4.5 l-4.5 -4.5 z M80.2 457.8 v9" fill="none" stroke="#ff8c00" stroke-width="1.5"/><path d="M91.9 475.2 l4.5 4.5 l-4.5 4.5 l-4.5 -4.5 z M91.9 475.2 v9" fill="none" stroke="#ff8c00" stroke-width="1.5"/><path d="M104.2 488.3 l4.5 4.5 l-4.5 4.5 l-4.5 -4.5 z M104.2 488.3 v9" fill="none" stroke="#ff8c00" stroke-width="1.5"/><path d="M116.1 496.9 l4.5 4.5 l-4.5 4.5 l-4.5 -4.5 z M116.1 496.9 v9" fill="none" stroke="#ff8c00" stroke-width="1.5"/><path d="M128.1 502.8 l4.5 4.5 l-4.5 4.5 l-4.5 -4.5 z M128.1 502.8 v9" fill="none" stroke="#ff8c00" stroke-width="1.5"/><path d="M140.1 509.9 l4.5 4.5 l-4.5 4.5 l-4.5 -4.5 z M140.1 509.9 v9" fill="none" stroke="#ff8c00" stroke-width="1.5"/><path d="M152.3 514.6 l4.5 4.5 l-4.5 4.5 l-4.5 -4.5 z M152.3 514.6 v9" fill="none" stroke="#ff8c00" stroke-width="1.5"/><path d="M163.3 519.0 l4.5 4.5 l-4.5 4.5 l-4.5 -4.5 z M163.3 519.0 v9" fill="none" stroke="#ff8c00" stroke-width="1.5"/><path d="M175.3 520.8 l4.5 4.5 l-4.5 4.5 l-4.5 -4.5 z M175.3 520.8 v9" fill="none" stroke="#ff8c00" stroke-width="1.5"/><path d="M187.0 520.8 l4.5 4.5 l-4.5 4.5 l-4.5 -4.5 z M187.0 520.8 v9" fill="none" stroke="#ff8c00" stroke-width="1.5"/><path d="M199.2 521.6 l4.5 4.5 l-4.5 4.5 l-4.5 -4.5 z M199.2 521.6 v9" fill="none" stroke="#ff8c00" stroke-width="1.5"/><path d="M210.9 522.9 l4.5 4.5 l-4.5 4.5 l-4.5 -4.5 z M210.9 522.9 v9" fill="none" stroke="#ff8c00" stroke-width="1.5"/><path d="M223.2 523.7 l4.5 4.5 l-4.5 4.5 l-4.5 -4.5 z M223.2 523.7 v9" fill="none" stroke="#ff8c00" stroke-width="1.5"/><path d="M234.4 525.0 l4.5 4.5 l-4.5 4.5 l-4.5 -4.5 z M234.4 525.0 v9" fill="none" stroke="#ff8c00" stroke-width="1.5"/><path d="M246.1 526.8 l4.5 4.5 l-4.5 4.5 l-4.5 -4.5 z M246.1 526.8 v9" fill="none" stroke="#ff8c00" stroke-width="1.5"/><path d="M258.1 527.6 l4.5 4.5 l-4.5 4.5 l-4.5 -4.5 z M258.1 527.6 v9" fill="none" stroke="#ff8c00" stroke-width="1.5"/><path d="M270.3 529.4 l4.5 4.5 l-4.5 4.5 l-4.5 -4.5 z M270.3 529.4 v9" fill="none" stroke="#ff8c00" stroke-width="1.5"/><path d="M282.0 529.9 l4.5 4.5 l-4.5 4.5 l-4.5 -4.5 z M282.0 529.9 v9" fill="none" stroke="#ff8c00" stroke-width="1.5"/><path d="M293.8 529.4 l4.5 4.5 l-4.5 4.5 l-4.5 -4.5 z M293.8 529.4 v9" fill="none" stroke="#ff8c00" stroke-width="1.5"/><path d="M305.2 528.6 l4.5 4.5 l-4.5 4.5 l-4.5 -4.5 z M305.2 528.6 v9" fill="none" stroke="#ff8c00" stroke-width="1.5"/><path d="M317.2 528.6 l4.5 4.5 l-4.5 4.5 l-4.5 -4.5 z M317.2 528.6 v9" fill="none" stroke="#ff8c00" stroke-width="1.5"/><path d="M328.6 527.6 l4.5 4.5 l-4.5 4.5 l-4.5 -4.5 z M328.6 527.6 v9" fill="none" stroke="#ff8c00" stroke-width="1.5"/><path d="M340.6 526.8 l4.5 4.5 l-4.5 4.5 l-4.5 -4.5 z M340.6 526.8 v9" fill="none" stroke="#ff8c00" stroke-width="1.5"/><path d="M352.9 527.6 l4.5 4.5 l-4.5 4.5 l-4.5 -4.5 z M352.9 527.6 v9" fill="none" stroke="#ff8c00" stroke-width="1.5"/><path d="M365.1 528.6 l4.5 4.5 l-4.5 4.5 l-4.5 -4.5 z M365.1 528.6 v9" fill="none" stroke="#ff8c00" stroke-width="1.5"/><path d="M377.1 529.4 l4.5 4.5 l-4.5 4.5 l-4.5 -4.5 z M377.1 529.4 v9" fill="none" stroke="#ff8c00" stroke-width="1.5"/><path d="M388.0 529.4 l4.5 4.5 l-4.5 4.5 l-4.5 -4.5 z M388.0 529.4 v9" fill="none" stroke="#ff8c00" stroke-width="1.5"/><path d="M400.0 528.1 l4.5 4.5 l-4.5 4.5 l-4.5 -4.5 z M400.0 528.1 v9" fill="none" stroke="#ff8c00" stroke-width="1.5"/><path d="M412.0 527.6 l4.5 4.5 l-4.5 4.5 l-4.5 -4.5 z M412.0 527.6 v9" fill="none" stroke="#ff8c00" stroke-width="1.5"/><path d="M424.0 526.8 l4.5 4.5 l-4.5 4.5 l-4.5 -4.5 z M424.0 526.8 v9" fill="none" stroke="#ff8c00" stroke-width="1.5"/><path d="M436.2 525.5 l4.5 4.5 l-4.5 4.5 l-4.5 -4.5 z M436.2 525.5 v9" fill="none" stroke="#ff8c00" stroke-width="1.5"/><path d="M447.9 524.7 l4.5 4.5 l-4.5 4.5 l-4.5 -4.5 z M447.9 524.7 v9" fill="none" stroke="#ff8c00" stroke-width="1.5"/><path d="M459.1 525.5 l4.5 4.5 l-4.5 4.5 l-4.5 -4.5 z M459.1 525.5 v9" fill="none" stroke="#ff8c00" stroke-width="1.5"/><path d="M470.8 524.7 l4.5 4.5 l-4.5 4.5 l-4.5 -4.5 z M470.8 524.7 v9" fill="none" stroke="#ff8c00" stroke-width="1.5"/><path d="M483.0 525.5 l4.5 4.5 l-4.5 4.5 l-4.5 -4.5 z M483.0 525.5 v9" fill="none" stroke="#ff8c00" stroke-width="1.5"/><path d="M495.3 526.8 l4.5 4.5 l-4.5 4.5 l-4.5 -4.5 z M495.3 526.8 v9" fill="none" stroke="#ff8c00" stroke-width="1.5"/><path d="M507.3 524.2 l4.5 4.5 l-4.5 4.5 l-4.5 -4.5 z M507.3 524.2 v9" fill="none" stroke="#ff8c00" stroke-width="1.5"/><path d="M519.0 523.4 l4.5 4.5 l-4.5 4.5 l-4.5 -4.5 z M519.0 523.4 v9" fill="none" stroke="#ff8c00" stroke-width="1.5"/><path d="M530.2 522.9 l4.5 4.5 l-4.5 4.5 l-4.5 -4.5 z M530.2 522.9 v9" fill="none" stroke="#ff8c00" stroke-width="1.5"/><path d="M542.2 522.4 l4.5 4.5 l-4.5 4.5 l-4.5 -4.5 z M542.2 522.4 v9" fill="none" stroke="#ff8c00" stroke-width="1.5"/><path d="M554.2 521.6 l4.5 4.5 l-4.5 4.5 l-4.5 -4.5 z M554.2 521.6 v9" fill="none" stroke="#ff8c00" stroke-width="1.5"/><path d="M566.1 521.6 l4.5 4.5 l-4.5 4.5 l-4.5 -4.5 z M566.1 521.6 v9" fill="none" stroke="#ff8c00" stroke-width="1.5"/><path d="M578.1 521.6 l4.5 4.5 l-4.5 4.5 l-4.5 -4.5 z M578.1 521.6 v9" fill="none" stroke="#ff8c00" stroke-width="1.5"/><path d="M590.1 522.4 l4.5 4.5 l-4.5 4.5 l-4.5 -4.5 z M590.1 522.4 v9" fill="none" stroke="#ff8c00" stroke-width="1.5"/><path d="M601.6 521.1 l4.5 4.5 l-4.5 4.5 l-4.5 -4.5 z M601.6 521.1 v9" fill="none" stroke="#ff8c00" stroke-width="1.5"/><path d="M613.3 519.5 l4.5 4.5 l-4.5 4.5 l-4.5 -4.5 z M613.3 519.5 v9" fill="none" stroke="#ff8c00" stroke-width="1.5"/><path d="M625.3 517.7 l4.5 4.5 l-4.5 4.5 l-4.5 -4.5 z M625.3 517.7 v9" fill="none" stroke="#ff8c00" stroke-width="1.5"/><path d="M637.2 517.2 l4.5 4.5 l-4.5 4.5 l-4.5 -4.5 z M637.2 517.2 v9" fill="none" stroke="#ff8c00" stroke-width="1.5"/><path d="M649.2 516.4 l4.5 4.5 l-4.5 4.5 l-4.5 -4.5 z M649.2 516.4 v9" fill="none" stroke="#ff8c00" stroke-width="1.5"/><path d="M671.9 516.9 l4.5 4.5 l-4.5 4.5 l-4.5 -4.5 z M671.9 516.9 v9" fill="none" stroke="#ff8c00" stroke-width="1.5"/><path d="M684.1 517.7 l4.5 4.5 l-4.5 4.5 l-4.5 -4.5 z M684.1 517.7 v9" fill="none" stroke="#ff8c00" stroke-width="1.5"/><path d="M696.1 517.7 l4.5 4.5 l-4.5 4.5 l-4.5 -4.5 z M696.1 517.7 v9" fill="none" stroke="#ff8c00" stroke-width="1.5"/><path d="M708.3 516.4 l4.5 4.5 l-4.5 4.5 l-4.5 -4.5 z M708.3 516.4 v9" fill="none" stroke="#ff8c00" stroke-width="1.5"/><path d="M720.0 513.8 l4.5 4.5 l-4.5 4.5 l-4.5 -4.5 z M720.0 513.8 v9" fill="none" stroke="#ff8c00" stroke-width="1.5"/><path d="M732.0 512.5 l4.5 4.5 l-4.5 4.5 l-4.5 -4.5 z M732.0 512.5 v9" fill="none" stroke="#ff8c00" stroke-width="1.5"/><path d="M743.5 511.2 l4.5 4.5 l-4.5 4.5 l-4.5 -4.5 z M743.5 511.2 v9" fill="none" stroke="#ff8c00" stroke-width="1.5"/><path d="M755.2 512.5 l4.5 4.5 l-4.5 4.5 l-4.5 -4.5 z M755.2 512.5 v9" fill="none" stroke="#ff8c00" stroke-width="1.5"/><path d="M766.9 511.7 l4.5 4.5 l-4.5 4.5 l-4.5 -4.5 z M766.9 511.7 v9" fill="none" stroke="#ff8c00" stroke-width="1.5"/><path d="M779.2 511.7 l4.5 4.5 l-4.5 4.5 l-4.5 -4.5 z M779.2 511.7 v9" fill="none" stroke="#ff8c00" stroke-width="1.5"/><path d="M791.1 511.7 l4.5 4.5 l-4.5 4.5 l-4.5 -4.5 z M791.1 511.7 v9" fill="none" stroke="#ff8c00" stroke-width="1.5"/><path d="M803.4 510.7 l4.5 4.5 l-4.5 4.5 l-4.5 -4.5 z M803.4 510.7 v9" fill="none" stroke="#ff8c00" stroke-width="1.5"/><path d="M815.1 508.6 l4.5 4.5 l-4.5 4.5 l-4.5 -4.5 z M815.1 508.6 v9" fill="none" stroke="#ff8c00" stroke-width="1.5"/><path d="M826.3 507.3 l4.5 4.5 l-4.5 4.5 l-4.5 -4.5 z M826.3 507.3 v9" fill="none" stroke="#ff8c00" stroke-width="1.5"/><path d="M838.0 506.0 l4.5 4.5 l-4.5 4.5 l-4.5 -4.5 z M838.0 506.0 v9" fill="none" stroke="#ff8c00" stroke-width="1.5"/><path d="M850.3 505.5 l4.5 4.5 l-4.5 4.5 l-4.5 -4.5 z M850.3 505.5 v9" fill="none" stroke="#ff8c00" stroke-width="1.5"/><path d="M862.0 506.0 l4.5 4.5 l-4.5 4.5 l-4.5 -4.5 z M862.0 506.0 v9" fill="none" stroke="#ff8c00" stroke-width="1.5"/><path d="M874.0 505.2 l4.5 4.5 l-4.5 4.5 l-4.5 -4.5 z M874.0 505.2 v9" fill="none" stroke="#ff8c00" stroke-width="1.5"/><path d="M885.4 504.4 l4.5 4.5 l-4.5 4.5 l-4.5 -4.5 z M885.4 504.4 v9" fill="none" stroke="#ff8c00" stroke-width="1.5"/><path d="M891.5 504.0 l4.5 4.5 l-4.5 4.5 l-4.5 -4.5 z M891.5 504.0 v9" fill="none" stroke="#ff8c00" stroke-width="1.5"/><path d="M897.5 504.5 l4.5 4.5 l-4.5 4.5 l-4.5 -4.5 z M897.5 504.5 v9" fill="none" stroke="#ff8c00" stroke-width="1.5"/><path d="M903.5 503.5 l4.5 4.5 l-4.5 4.5 l-4.5 -4.5 z M903.5 503.5 v9" fill="none" stroke="#ff8c00" stroke-width="1.5"/><path d="M909.5 503.0 l4.5 4.5 l-4.5 4.5 l-4.5 -4.5 z M909.5 503.0 v9" fill="none" stroke="#ff8c00" stroke-width="1.5"/><path d="M915.5 503.0 l4.5 4.5 l-4.5 4.5 l-4.5 -4.5 z M915.5 503.0 v9" fill="none" stroke="#ff8c00" stroke-width="1.5"/><path d="M921.5 502.5 l4.5 4.5 l-4.5 4.5 l-4.5 -4.5 z M921.5 502.5 v9" fill="none" stroke="#ff8c00" stroke-width="1.5"/><path d="M927.5 502.5 l4.5 4.5 l-4.5 4.5 l-4.5 -4.5 z M927.5 502.5 v9" fill="none" stroke="#ff8c00" stroke-width="1.5"/><path d="M933.5 502.0 l4.5 4.5 l-4.5 4.5 l-4.5 -4.5 z M933.5 502.0 v9" fill="none" stroke="#ff8c00" stroke-width="1.5"/><path d="M939.5 501.5 l4.5 4.5 l-4.5 4.5 l-4.5 -4.5 z M939.5 501.5 v9" fill="none" stroke="#ff8c00" stroke-width="1.5"/><path d="M945.5 501.7 l4.5 4.5 l-4.5 4.5 l-4.5 -4.5 z M945.5 501.7 v9" fill="none" stroke="#ff8c00" stroke-width="1.5"/><path d="M951.5 501.5 l4.5 4.5 l-4.5 4.5 l-4.5 -4.5 z M951.5 501.5 v9" fill="none" stroke="#ff8c00" stroke-width="1.5"/><path d="M957.5 501.0 l4.5 4.5 l-4.5 4.5 l-4.5 -4.5 z M957.5 501.0 v9" fill="none" stroke="#ff8c00" stroke-width="1.5"/><path d="M962.5 501.0 l4.5 4.5 l-4.5 4.5 l-4.5 -4.5 z M962.5 501.0 v9" fill="none" stroke="#ff8c00" stroke-width="1.5"/><path d="M968.5 499.8 l4.5 4.5 l-4.5 4.5 l-4.5 -4.5 z M968.5 499.8 v9" fill="none" stroke="#ff8c00" stroke-width="1.5"/><polyline points="874.0,44.8 886.4,43.3 891.5,42.8 897.5,43.3 903.5,42.3 909.5,42.3 915.5,42.3 921.5,42.3 927.5,42.3 933.5,41.4 939.5,41.4 945.5,40.4 951.5,40.4 957.5,40.4 962.5,40.4 968.5,40.4" fill="none" stroke="#ff0000" stroke-width="1" stroke-dasharray="2 3"/><path d="M886.4 38.8 l4.5 4.5 l-4.5 4.5 l-4.5 -4.5 z M886.4 38.8 v9" fill="none" stroke="#daa520" stroke-width="1.5"/><path d="M891.5 38.3 l4.5 4.5 l-4.5 4.5 l-4.5 -4.5 z M891.5 38.3 v9" fill="none" stroke="#daa520" stroke-width="1.5"/><path d="M897.5 38.8 l4.5 4.5 l-4.5 4.5 l-4.5 -4.5 z M897.5 38.8 v9" fill="none" stroke="#daa520" stroke-width="1.5"/><path d="M903.5 37.8 l4.5 4.5 l-4.5 4.5 l-4.5 -4.5 z M903.5 37.8 v9" fill="none" stroke="#daa520" stroke-width="1.5"/><path d="M909.5 37.8 l4.5 4.5 l-4.5 4.5 l-4.5 -4.5 z M909.5 37.8 v9" fill="none" stroke="#daa520" stroke-width="1.5"/><path d="M915.5 37.8 l4.5 4.5 l-4.5 4.5 l-4.5 -4.5 z M915.5 37.8 v9" fill="none" stroke="#daa520" stroke-width="1.5"/><path d="M921.5 37.8 l4.5 4.5 l-4.5 4.5 l-4.5 -4.5 z M921.5 37.8 v9" fill="none" stroke="#daa520" stroke-width="1.5"/><path d="M927.5 37.8 l4.5 4.5 l-4.5 4.5 l-4.5 -4.5 z M927.5 37.8 v9" fill="none" stroke="#daa520" stroke-width="1.5"/><path d="M933.5 36.9 l4.5 4.5 l-4.5 4.5 l-4.5 -4.5 z M933.5 36.9 v9" fill="none" stroke="#daa520" stroke-width="1.5"/><path d="M939.5 36.9 l4.5 4.5 l-4.5 4.5 l-4.5 -4.5 z M939.5 36.9 v9" fill="none" stroke="#daa520" stroke-width="1.5"/><path d="M945.5 35.9 l4.5 4.5 l-4.5 4.5 l-4.5 -4.5 z M945.5 35.9 v9" fill="none" stroke="#daa520" stroke-width="1.5"/><path d="M951.5 35.9 l4.5 4.5 l-4.5 4.5 l-4.5 -4.5 z M951.5 35.9 v9" fill="none" stroke="#daa520" stroke-width="1.5"/><path d="M957.5 35.9 l4.5 4.5 l-4.5 4.5 l-4.5 -4.5 z M957.5 35.9 v9" fill="none" stroke="#daa520" stroke-width="1.5"/><path d="M962.5 35.9 l4.5 4.5 l-4.5 4.5 l-4.5 -4.5 z M962.5 35.9 v9" fill="none" stroke="#daa520" stroke-width="1.5"/><path d="M968.5 35.9 l4.5 4.5 l-4.5 4.5 l-4.5 -4.5 z M968.5 35.9 v9" fill="none" stroke="#daa520" stroke-width="1.5"/></svg><div class="t" style="left:34.00px;top:26.99px;font-size:11.00px;color:#3a3a3a;font-weight:bold;">Intensity 1619</div><div class="t" style="left:34.00px;top:210.99px;font-size:11.00px;color:#000;">Abs. Peak Area 1680-1725</div><div class="t" style="left:34.00px;top:394.69px;font-size:11.00px;color:#000;">Abs. Peak Area 1650-1680</div><div class="t" style="left:3.00px;top:95.84px;font-size:12.00px;color:#000;transform:scaleX(0.9591);transform-origin:0 0;">0,2</div><div class="t" style="left:7.00px;top:410.84px;font-size:12.00px;color:#000;transform:scaleX(0.8990);transform-origin:0 0;">15</div><div class="t" style="left:7px;top:198px;font-size:12px;transform:rotate(-90deg);transform-origin:0 0;width:60px">Arb.Units</div><div class="t" style="left:7px;top:508px;font-size:12px;transform:rotate(-90deg);transform-origin:0 0;width:60px">Arb.Units</div><div class="t" style="left:36.06px;top:560.44px;font-size:12.00px;color:#000;">0</div><div class="t" style="left:154.35px;top:560.44px;font-size:12.00px;color:#000;">5</div><div class="t" style="left:269.30px;top:560.44px;font-size:12.00px;color:#000;">10</div><div class="t" style="left:387.58px;top:560.44px;font-size:12.00px;color:#000;">15</div><div class="t" style="left:505.87px;top:560.44px;font-size:12.00px;color:#000;">20</div><div class="t" style="left:624.15px;top:560.44px;font-size:12.00px;color:#000;">25</div><div class="t" style="left:742.44px;top:560.44px;font-size:12.00px;color:#000;">30</div><div class="t" style="left:860.72px;top:560.44px;font-size:12.00px;color:#000;">35</div><div class="t" style="left:909.00px;top:560.44px;font-size:12.00px;color:#000;transform:scaleX(1.0343);transform-origin:0 0;">min</div>
<div class="b" style="left:989.00px;top:27.00px;width:547.00px;height:544.00px;background:#f0f0f0;border:1px solid #6d8fb7;box-sizing:border-box"></div><div class="b" style="left:990px;top:28px;width:528px;height:22px;background:linear-gradient(#ffffff 0%,#ffffff 45%,#f1f2f4 55%,#eff0f3 100%)"></div><div class="b" style="left:990.00px;top:50.00px;width:528.00px;height:1.00px;background:#d5d5d5"></div><div class="b" style="left:1029.50px;top:28.00px;width:1.00px;height:22.00px;background:#e3e3e5"></div><div class="b" style="left:1030.50px;top:28.00px;width:1.00px;height:22.00px;background:#fbfbfb"></div><div class="b" style="left:1085.50px;top:28.00px;width:1.00px;height:22.00px;background:#e3e3e5"></div><div class="b" style="left:1086.50px;top:28.00px;width:1.00px;height:22.00px;background:#fbfbfb"></div><div class="b" style="left:1149.20px;top:28.00px;width:1.00px;height:22.00px;background:#e3e3e5"></div><div class="b" style="left:1150.20px;top:28.00px;width:1.00px;height:22.00px;background:#fbfbfb"></div><div class="b" style="left:1227.30px;top:28.00px;width:1.00px;height:22.00px;background:#e3e3e5"></div><div class="b" style="left:1228.30px;top:28.00px;width:1.00px;height:22.00px;background:#fbfbfb"></div><div class="b" style="left:1369.40px;top:28.00px;width:1.00px;height:22.00px;background:#e3e3e5"></div><div class="b" style="left:1370.40px;top:28.00px;width:1.00px;height:22.00px;background:#fbfbfb"></div><div class="b" style="left:1511.20px;top:28.00px;width:1.00px;height:22.00px;background:#e3e3e5"></div><div class="b" style="left:1512.20px;top:28.00px;width:1.00px;height:22.00px;background:#fbfbfb"></div><svg class="b" style="left:996px;top:33px" width="14" height="14"><rect x="0.5" y="0.5" width="13" height="13" fill="#fff" stroke="#5e5e5e"/><rect x="3" y="3" width="8" height="7" fill="#1e1e1e"/></svg><div class="t" style="left:1035.00px;top:33.14px;font-size:12.00px;color:#000;transform:scaleX(0.9093);transform-origin:0 0;">Sample</div><div class="t" style="left:1091.00px;top:33.14px;font-size:12.00px;color:#000;transform:scaleX(0.9269);transform-origin:0 0;">Time [min]</div><div class="t" style="left:1155.00px;top:33.14px;font-size:12.00px;color:#000;transform:scaleX(0.9101);transform-origin:0 0;">Intensity 1619</div><div class="t" style="left:1233.00px;top:33.14px;font-size:12.00px;color:#000;transform:scaleX(0.9202);transform-origin:0 0;">Abs. Peak Area 1680-1725</div><div class="t" style="left:1375.00px;top:33.14px;font-size:12.00px;color:#000;transform:scaleX(0.9133);transform-origin:0 0;">Abs. Peak Area 1650-1680</div><div class="b" style="left:990.00px;top:51.00px;width:528.00px;height:506.00px;background:#fff"></div><div class="b" style="left:990.00px;top:68.00px;width:528.00px;height:1.30px;background:#d6d6d6"></div><svg class="b" style="left:992px;top:53px" width="14" height="14"><rect x="0.5" y="0.5" width="13" height="13" fill="#fff" stroke="#5e5e5e" stroke-width="1"/></svg><div class="t" style="left:1031.50px;top:52.34px;font-size:12.00px;color:#000;transform:scaleX(0.9200);transform-origin:0 0;">131</div><div class="t" style="left:1087.50px;top:52.34px;font-size:12.00px;color:#000;transform:scaleX(0.9200);transform-origin:0 0;">32.5</div><div class="t" style="left:1151.00px;top:52.34px;font-size:12.00px;color:#000;transform:scaleX(0.9200);transform-origin:0 0;">0.320</div><div class="t" style="left:1229.50px;top:52.34px;font-size:12.00px;color:#000;transform:scaleX(0.9200);transform-origin:0 0;">0.589</div><div class="t" style="left:1371.50px;top:52.34px;font-size:12.00px;color:#000;transform:scaleX(0.9200);transform-origin:0 0;">11.953</div><div class="b" style="left:990.00px;top:86.00px;width:528.00px;height:1.30px;background:#d6d6d6"></div><svg class="b" style="left:992px;top:71px" width="14" height="14"><rect x="0.5" y="0.5" width="13" height="13" fill="#fff" stroke="#5e5e5e" stroke-width="1"/><path d="M3 7 L5.6 10 L11 3.5" fill="none" stroke="#000" stroke-width="1.8"/></svg><div class="t" style="left:1031.50px;top:70.34px;font-size:12.00px;color:#000;transform:scaleX(0.9200);transform-origin:0 0;">132</div><div class="t" style="left:1087.50px;top:70.34px;font-size:12.00px;color:#000;transform:scaleX(0.9200);transform-origin:0 0;">32.8</div><div class="t" style="left:1151.00px;top:70.34px;font-size:12.00px;color:#000;transform:scaleX(0.9200);transform-origin:0 0;">0.321</div><div class="t" style="left:1229.50px;top:70.34px;font-size:12.00px;color:#000;transform:scaleX(0.9200);transform-origin:0 0;">0.595</div><div class="t" style="left:1371.50px;top:70.34px;font-size:12.00px;color:#000;transform:scaleX(0.9200);transform-origin:0 0;">11.962</div><div class="b" style="left:990.00px;top:105.00px;width:528.00px;height:1.30px;background:#d6d6d6"></div><svg class="b" style="left:992px;top:89px" width="14" height="14"><rect x="0.5" y="0.5" width="13" height="13" fill="#fff" stroke="#5e5e5e" stroke-width="1"/></svg><div class="t" style="left:1031.50px;top:88.34px;font-size:12.00px;color:#000;transform:scaleX(0.9200);transform-origin:0 0;">133</div><div class="t" style="left:1087.50px;top:88.34px;font-size:12.00px;color:#000;transform:scaleX(0.9200);transform-origin:0 0;">33</div><div class="t" style="left:1151.00px;top:88.34px;font-size:12.00px;color:#000;transform:scaleX(0.9200);transform-origin:0 0;">0.322</div><div class="t" style="left:1229.50px;top:88.34px;font-size:12.00px;color:#000;transform:scaleX(0.9200);transform-origin:0 0;">0.580</div><div class="t" style="left:1371.50px;top:88.34px;font-size:12.00px;color:#000;transform:scaleX(0.9200);transform-origin:0 0;">11.975</div><div class="b" style="left:990.00px;top:123.00px;width:528.00px;height:1.30px;background:#d6d6d6"></div><svg class="b" style="left:992px;top:108px" width="14" height="14"><rect x="0.5" y="0.5" width="13" height="13" fill="#fff" stroke="#5e5e5e" stroke-width="1"/><path d="M3 7 L5.6 10 L11 3.5" fill="none" stroke="#000" stroke-width="1.8"/></svg><div class="t" style="left:1031.50px;top:107.34px;font-size:12.00px;color:#000;transform:scaleX(0.9200);transform-origin:0 0;">134</div><div class="t" style="left:1087.50px;top:107.34px;font-size:12.00px;color:#000;transform:scaleX(0.9200);transform-origin:0 0;">33.3</div><div class="t" style="left:1151.00px;top:107.34px;font-size:12.00px;color:#000;transform:scaleX(0.9200);transform-origin:0 0;">0.323</div><div class="t" style="left:1229.50px;top:107.34px;font-size:12.00px;color:#000;transform:scaleX(0.9200);transform-origin:0 0;">0.597</div><div class="t" style="left:1371.50px;top:107.34px;font-size:12.00px;color:#000;transform:scaleX(0.9200);transform-origin:0 0;">11.985</div><div class="b" style="left:990.00px;top:141.00px;width:528.00px;height:1.30px;background:#d6d6d6"></div><svg class="b" style="left:992px;top:126px" width="14" height="14"><rect x="0.5" y="0.5" width="13" height="13" fill="#fff" stroke="#5e5e5e" stroke-width="1"/></svg><div class="t" style="left:1031.50px;top:125.34px;font-size:12.00px;color:#000;transform:scaleX(0.9200);transform-origin:0 0;">135</div><div class="t" style="left:1087.50px;top:125.34px;font-size:12.00px;color:#000;transform:scaleX(0.9200);transform-origin:0 0;">33.6</div><div class="t" style="left:1151.00px;top:125.34px;font-size:12.00px;color:#000;transform:scaleX(0.9200);transform-origin:0 0;">0.323</div><div class="t" style="left:1229.50px;top:125.34px;font-size:12.00px;color:#000;transform:scaleX(0.9200);transform-origin:0 0;">0.584</div><div class="t" style="left:1371.50px;top:125.34px;font-size:12.00px;color:#000;transform:scaleX(0.9200);transform-origin:0 0;">12.003</div><div class="b" style="left:990.00px;top:159.00px;width:528.00px;height:1.30px;background:#d6d6d6"></div><svg class="b" style="left:992px;top:144px" width="14" height="14"><rect x="0.5" y="0.5" width="13" height="13" fill="#fff" stroke="#5e5e5e" stroke-width="1"/><path d="M3 7 L5.6 10 L11 3.5" fill="none" stroke="#000" stroke-width="1.8"/></svg><div class="t" style="left:1031.50px;top:143.34px;font-size:12.00px;color:#000;transform:scaleX(0.9200);transform-origin:0 0;">136</div><div class="t" style="left:1087.50px;top:143.34px;font-size:12.00px;color:#000;transform:scaleX(0.9200);transform-origin:0 0;">33.8</div><div class="t" style="left:1151.00px;top:143.34px;font-size:12.00px;color:#000;transform:scaleX(0.9200);transform-origin:0 0;">0.325</div><div class="t" style="left:1229.50px;top:143.34px;font-size:12.00px;color:#000;transform:scaleX(0.9200);transform-origin:0 0;">0.574</div><div class="t" style="left:1371.50px;top:143.34px;font-size:12.00px;color:#000;transform:scaleX(0.9200);transform-origin:0 0;">12.019</div><div class="b" style="left:990.00px;top:177.00px;width:528.00px;height:1.30px;background:#d6d6d6"></div><svg class="b" style="left:992px;top:162px" width="14" height="14"><rect x="0.5" y="0.5" width="13" height="13" fill="#fff" stroke="#5e5e5e" stroke-width="1"/></svg><div class="t" style="left:1031.50px;top:161.34px;font-size:12.00px;color:#000;transform:scaleX(0.9200);transform-origin:0 0;">137</div><div class="t" style="left:1087.50px;top:161.34px;font-size:12.00px;color:#000;transform:scaleX(0.9200);transform-origin:0 0;">34.1</div><div class="t" style="left:1151.00px;top:161.34px;font-size:12.00px;color:#000;transform:scaleX(0.9200);transform-origin:0 0;">0.325</div><div class="t" style="left:1229.50px;top:161.34px;font-size:12.00px;color:#000;transform:scaleX(0.9200);transform-origin:0 0;">0.561</div><div class="t" style="left:1371.50px;top:161.34px;font-size:12.00px;color:#000;transform:scaleX(0.9200);transform-origin:0 0;">12.037</div><div class="b" style="left:990.00px;top:195.00px;width:528.00px;height:1.30px;background:#d6d6d6"></div><svg class="b" style="left:992px;top:180px" width="14" height="14"><rect x="0.5" y="0.5" width="13" height="13" fill="#fff" stroke="#5e5e5e" stroke-width="1"/><path d="M3 7 L5.6 10 L11 3.5" fill="none" stroke="#000" stroke-width="1.8"/></svg><div class="t" style="left:1031.50px;top:179.34px;font-size:12.00px;color:#000;transform:scaleX(0.9200);transform-origin:0 0;">138</div><div class="t" style="left:1087.50px;top:179.34px;font-size:12.00px;color:#000;transform:scaleX(0.9200);transform-origin:0 0;">34.3</div><div class="t" style="left:1151.00px;top:179.34px;font-size:12.00px;color:#000;transform:scaleX(0.9200);transform-origin:0 0;">0.327</div><div class="t" style="left:1229.50px;top:179.34px;font-size:12.00px;color:#000;transform:scaleX(0.9200);transform-origin:0 0;">0.569</div><div class="t" style="left:1371.50px;top:179.34px;font-size:12.00px;color:#000;transform:scaleX(0.9200);transform-origin:0 0;">12.037</div><div class="b" style="left:990.00px;top:213.00px;width:528.00px;height:1.30px;background:#d6d6d6"></div><svg class="b" style="left:992px;top:198px" width="14" height="14"><rect x="0.5" y="0.5" width="13" height="13" fill="#fff" stroke="#5e5e5e" stroke-width="1"/></svg><div class="t" style="left:1031.50px;top:197.34px;font-size:12.00px;color:#000;transform:scaleX(0.9200);transform-origin:0 0;">139</div><div class="t" style="left:1087.50px;top:197.34px;font-size:12.00px;color:#000;transform:scaleX(0.9200);transform-origin:0 0;">34.6</div><div class="t" style="left:1151.00px;top:197.34px;font-size:12.00px;color:#000;transform:scaleX(0.9200);transform-origin:0 0;">0.327</div><div class="t" style="left:1229.50px;top:197.34px;font-size:12.00px;color:#000;transform:scaleX(0.9200);transform-origin:0 0;">0.547</div><div class="t" style="left:1371.50px;top:197.34px;font-size:12.00px;color:#000;transform:scaleX(0.9200);transform-origin:0 0;">12.046</div><div class="b" style="left:990.00px;top:231.00px;width:528.00px;height:1.30px;background:#d6d6d6"></div><svg class="b" style="left:992px;top:216px" width="14" height="14"><rect x="0.5" y="0.5" width="13" height="13" fill="#fff" stroke="#5e5e5e" stroke-width="1"/><path d="M3 7 L5.6 10 L11 3.5" fill="none" stroke="#000" stroke-width="1.8"/></svg><div class="t" style="left:1031.50px;top:215.34px;font-size:12.00px;color:#000;transform:scaleX(0.9200);transform-origin:0 0;">140</div><div class="t" style="left:1087.50px;top:215.34px;font-size:12.00px;color:#000;transform:scaleX(0.9200);transform-origin:0 0;">34.8</div><div class="t" style="left:1151.00px;top:215.34px;font-size:12.00px;color:#000;transform:scaleX(0.9200);transform-origin:0 0;">0.326</div><div class="t" style="left:1229.50px;top:215.34px;font-size:12.00px;color:#000;transform:scaleX(0.9200);transform-origin:0 0;">0.586</div><div class="t" style="left:1371.50px;top:215.34px;font-size:12.00px;color:#000;transform:scaleX(0.9200);transform-origin:0 0;">12.024</div><div class="b" style="left:990.00px;top:249.00px;width:528.00px;height:1.30px;background:#d6d6d6"></div><svg class="b" style="left:992px;top:234px" width="14" height="14"><rect x="0.5" y="0.5" width="13" height="13" fill="#fff" stroke="#5e5e5e" stroke-width="1"/></svg><div class="t" style="left:1031.50px;top:233.34px;font-size:12.00px;color:#000;transform:scaleX(0.9200);transform-origin:0 0;">141</div><div class="t" style="left:1087.50px;top:233.34px;font-size:12.00px;color:#000;transform:scaleX(0.9200);transform-origin:0 0;">35.1</div><div class="t" style="left:1151.00px;top:233.34px;font-size:12.00px;color:#000;transform:scaleX(0.9200);transform-origin:0 0;">0.328</div><div class="t" style="left:1229.50px;top:233.34px;font-size:12.00px;color:#000;transform:scaleX(0.9200);transform-origin:0 0;">0.566</div><div class="t" style="left:1371.50px;top:233.34px;font-size:12.00px;color:#000;transform:scaleX(0.9200);transform-origin:0 0;">12.062</div><div class="b" style="left:990.00px;top:267.00px;width:528.00px;height:1.30px;background:#d6d6d6"></div><svg class="b" style="left:992px;top:252px" width="14" height="14"><rect x="0.5" y="0.5" width="13" height="13" fill="#fff" stroke="#5e5e5e" stroke-width="1"/><path d="M3 7 L5.6 10 L11 3.5" fill="none" stroke="#000" stroke-width="1.8"/></svg><div class="t" style="left:1031.50px;top:251.34px;font-size:12.00px;color:#000;transform:scaleX(0.9200);transform-origin:0 0;">142</div><div class="t" style="left:1087.50px;top:251.34px;font-size:12.00px;color:#000;transform:scaleX(0.9200);transform-origin:0 0;">35.3</div><div class="t" style="left:1151.00px;top:251.34px;font-size:12.00px;color:#000;transform:scaleX(0.9200);transform-origin:0 0;">0.328</div><div class="t" style="left:1229.50px;top:251.34px;font-size:12.00px;color:#000;transform:scaleX(0.9200);transform-origin:0 0;">0.557</div><div class="t" style="left:1371.50px;top:251.34px;font-size:12.00px;color:#000;transform:scaleX(0.9200);transform-origin:0 0;">12.056</div><div class="b" style="left:990.00px;top:285.00px;width:528.00px;height:1.30px;background:#d6d6d6"></div><svg class="b" style="left:992px;top:270px" width="14" height="14"><rect x="0.5" y="0.5" width="13" height="13" fill="#fff" stroke="#5e5e5e" stroke-width="1"/></svg><div class="t" style="left:1031.50px;top:269.34px;font-size:12.00px;color:#000;transform:scaleX(0.9200);transform-origin:0 0;">143</div><div class="t" style="left:1087.50px;top:269.34px;font-size:12.00px;color:#000;transform:scaleX(0.9200);transform-origin:0 0;">35.6</div><div class="t" style="left:1151.00px;top:269.34px;font-size:12.00px;color:#000;transform:scaleX(0.9200);transform-origin:0 0;">0.329</div><div class="t" style="left:1229.50px;top:269.34px;font-size:12.00px;color:#000;transform:scaleX(0.9200);transform-origin:0 0;">0.548</div><div class="t" style="left:1371.50px;top:269.34px;font-size:12.00px;color:#000;transform:scaleX(0.9200);transform-origin:0 0;">12.067</div><div class="b" style="left:990.00px;top:303.00px;width:528.00px;height:1.30px;background:#d6d6d6"></div><div class="b" style="left:1150.50px;top:286.50px;width:75.50px;height:15.50px;background:#f1dcab"></div><svg class="b" style="left:992px;top:288px" width="14" height="14"><rect x="0.5" y="0.5" width="13" height="13" fill="#fff" stroke="#5e5e5e" stroke-width="1"/><path d="M3 7 L5.6 10 L11 3.5" fill="none" stroke="#000" stroke-width="1.8"/></svg><div class="t" style="left:1031.50px;top:287.34px;font-size:12.00px;color:#000;transform:scaleX(0.9200);transform-origin:0 0;">144</div><div class="t" style="left:1087.50px;top:287.34px;font-size:12.00px;color:#000;transform:scaleX(0.9200);transform-origin:0 0;">35.8</div><div class="t" style="left:1151.00px;top:287.34px;font-size:12.00px;color:#000;transform:scaleX(0.9200);transform-origin:0 0;">0.330</div><div class="t" style="left:1229.50px;top:287.34px;font-size:12.00px;color:#000;transform:scaleX(0.9200);transform-origin:0 0;">0.528</div><div class="t" style="left:1371.50px;top:287.34px;font-size:12.00px;color:#000;transform:scaleX(0.9200);transform-origin:0 0;">12.095</div><div class="b" style="left:990.00px;top:321.00px;width:528.00px;height:1.30px;background:#d6d6d6"></div><div class="b" style="left:1150.50px;top:304.50px;width:75.50px;height:15.50px;background:#f1dcab"></div><svg class="b" style="left:992px;top:306px" width="14" height="14"><rect x="0.5" y="0.5" width="13" height="13" fill="#fff" stroke="#5e5e5e" stroke-width="1"/><path d="M3 7 L5.6 10 L11 3.5" fill="none" stroke="#000" stroke-width="1.8"/></svg><div class="t" style="left:1031.50px;top:305.34px;font-size:12.00px;color:#000;transform:scaleX(0.9200);transform-origin:0 0;">145</div><div class="t" style="left:1087.50px;top:305.34px;font-size:12.00px;color:#000;transform:scaleX(0.9200);transform-origin:0 0;">36.1</div><div class="t" style="left:1151.00px;top:305.34px;font-size:12.00px;color:#000;transform:scaleX(0.9200);transform-origin:0 0;">0.331</div><div class="t" style="left:1229.50px;top:305.34px;font-size:12.00px;color:#000;transform:scaleX(0.9200);transform-origin:0 0;">0.549</div><div class="t" style="left:1371.50px;top:305.34px;font-size:12.00px;color:#000;transform:scaleX(0.9200);transform-origin:0 0;">12.081</div><div class="b" style="left:990.00px;top:339.00px;width:528.00px;height:1.30px;background:#d6d6d6"></div><div class="b" style="left:1150.50px;top:322.50px;width:75.50px;height:15.50px;background:#f1dcab"></div><svg class="b" style="left:992px;top:324px" width="14" height="14"><rect x="0.5" y="0.5" width="13" height="13" fill="#fff" stroke="#5e5e5e" stroke-width="1"/><path d="M3 7 L5.6 10 L11 3.5" fill="none" stroke="#000" stroke-width="1.8"/></svg><div class="t" style="left:1031.50px;top:323.34px;font-size:12.00px;color:#000;transform:scaleX(0.9200);transform-origin:0 0;">146</div><div class="t" style="left:1087.50px;top:323.34px;font-size:12.00px;color:#000;transform:scaleX(0.9200);transform-origin:0 0;">36.3</div><div class="t" style="left:1151.00px;top:323.34px;font-size:12.00px;color:#000;transform:scaleX(0.9200);transform-origin:0 0;">0.331</div><div class="t" style="left:1229.50px;top:323.34px;font-size:12.00px;color:#000;transform:scaleX(0.9200);transform-origin:0 0;">0.528</div><div class="t" style="left:1371.50px;top:323.34px;font-size:12.00px;color:#000;transform:scaleX(0.9200);transform-origin:0 0;">12.090</div><div class="b" style="left:990.00px;top:357.00px;width:528.00px;height:1.30px;background:#d6d6d6"></div><div class="b" style="left:1150.50px;top:340.50px;width:75.50px;height:15.50px;background:#f1dcab"></div><svg class="b" style="left:992px;top:342px" width="14" height="14"><rect x="0.5" y="0.5" width="13" height="13" fill="#fff" stroke="#5e5e5e" stroke-width="1"/><path d="M3 7 L5.6 10 L11 3.5" fill="none" stroke="#000" stroke-width="1.8"/></svg><div class="t" style="left:1031.50px;top:341.34px;font-size:12.00px;color:#000;transform:scaleX(0.9200);transform-origin:0 0;">147</div><div class="t" style="left:1087.50px;top:341.34px;font-size:12.00px;color:#000;transform:scaleX(0.9200);transform-origin:0 0;">36.6</div><div class="t" style="left:1151.00px;top:341.34px;font-size:12.00px;color:#000;transform:scaleX(0.9200);transform-origin:0 0;">0.333</div><div class="t" style="left:1229.50px;top:341.34px;font-size:12.00px;color:#000;transform:scaleX(0.9200);transform-origin:0 0;">0.510</div><div class="t" style="left:1371.50px;top:341.34px;font-size:12.00px;color:#000;transform:scaleX(0.9200);transform-origin:0 0;">12.110</div><div class="b" style="left:990.00px;top:376.00px;width:528.00px;height:1.30px;background:#d6d6d6"></div><div class="b" style="left:1150.50px;top:358.50px;width:75.50px;height:15.50px;background:#f1dcab"></div><svg class="b" style="left:992px;top:360px" width="14" height="14"><rect x="0.5" y="0.5" width="13" height="13" fill="#fff" stroke="#5e5e5e" stroke-width="1"/><path d="M3 7 L5.6 10 L11 3.5" fill="none" stroke="#000" stroke-width="1.8"/></svg><div class="t" style="left:1031.50px;top:359.34px;font-size:12.00px;color:#000;transform:scaleX(0.9200);transform-origin:0 0;">148</div><div class="t" style="left:1087.50px;top:359.34px;font-size:12.00px;color:#000;transform:scaleX(0.9200);transform-origin:0 0;">36.8</div><div class="t" style="left:1151.00px;top:359.34px;font-size:12.00px;color:#000;transform:scaleX(0.9200);transform-origin:0 0;">0.333</div><div class="t" style="left:1229.50px;top:359.34px;font-size:12.00px;color:#000;transform:scaleX(0.9200);transform-origin:0 0;">0.511</div><div class="t" style="left:1371.50px;top:359.34px;font-size:12.00px;color:#000;transform:scaleX(0.9200);transform-origin:0 0;">12.150</div><div class="b" style="left:990.00px;top:394.00px;width:528.00px;height:1.30px;background:#d6d6d6"></div><div class="b" style="left:1150.50px;top:377.50px;width:75.50px;height:15.50px;background:#f1dcab"></div><svg class="b" style="left:992px;top:379px" width="14" height="14"><rect x="0.5" y="0.5" width="13" height="13" fill="#fff" stroke="#5e5e5e" stroke-width="1"/><path d="M3 7 L5.6 10 L11 3.5" fill="none" stroke="#000" stroke-width="1.8"/></svg><div class="t" style="left:1031.50px;top:378.34px;font-size:12.00px;color:#000;transform:scaleX(0.9200);transform-origin:0 0;">149</div><div class="t" style="left:1087.50px;top:378.34px;font-size:12.00px;color:#000;transform:scaleX(0.9200);transform-origin:0 0;">37.1</div><div class="t" style="left:1151.00px;top:378.34px;font-size:12.00px;color:#000;transform:scaleX(0.9200);transform-origin:0 0;">0.334</div><div class="t" style="left:1229.50px;top:378.34px;font-size:12.00px;color:#000;transform:scaleX(0.9200);transform-origin:0 0;">0.501</div><div class="t" style="left:1371.50px;top:378.34px;font-size:12.00px;color:#000;transform:scaleX(0.9200);transform-origin:0 0;">12.131</div><div class="b" style="left:990.00px;top:412.00px;width:528.00px;height:1.30px;background:#d6d6d6"></div><div class="b" style="left:1150.50px;top:395.50px;width:75.50px;height:15.50px;background:#f1dcab"></div><svg class="b" style="left:992px;top:397px" width="14" height="14"><rect x="0.5" y="0.5" width="13" height="13" fill="#fff" stroke="#5e5e5e" stroke-width="1"/><path d="M3 7 L5.6 10 L11 3.5" fill="none" stroke="#000" stroke-width="1.8"/></svg><div class="t" style="left:1031.50px;top:396.34px;font-size:12.00px;color:#000;transform:scaleX(0.9200);transform-origin:0 0;">150</div><div class="t" style="left:1087.50px;top:396.34px;font-size:12.00px;color:#000;transform:scaleX(0.9200);transform-origin:0 0;">37.3</div><div class="t" style="left:1151.00px;top:396.34px;font-size:12.00px;color:#000;transform:scaleX(0.9200);transform-origin:0 0;">0.333</div><div class="t" style="left:1229.50px;top:396.34px;font-size:12.00px;color:#000;transform:scaleX(0.9200);transform-origin:0 0;">0.506</div><div class="t" style="left:1371.50px;top:396.34px;font-size:12.00px;color:#000;transform:scaleX(0.9200);transform-origin:0 0;">12.160</div><div class="b" style="left:990.00px;top:430.00px;width:528.00px;height:1.30px;background:#d6d6d6"></div><div class="b" style="left:1150.50px;top:413.50px;width:75.50px;height:15.50px;background:#f1dcab"></div><svg class="b" style="left:992px;top:415px" width="14" height="14"><rect x="0.5" y="0.5" width="13" height="13" fill="#fff" stroke="#5e5e5e" stroke-width="1"/><path d="M3 7 L5.6 10 L11 3.5" fill="none" stroke="#000" stroke-width="1.8"/></svg><div class="t" style="left:1031.50px;top:414.34px;font-size:12.00px;color:#000;transform:scaleX(0.9200);transform-origin:0 0;">151</div><div class="t" style="left:1087.50px;top:414.34px;font-size:12.00px;color:#000;transform:scaleX(0.9200);transform-origin:0 0;">37.6</div><div class="t" style="left:1151.00px;top:414.34px;font-size:12.00px;color:#000;transform:scaleX(0.9200);transform-origin:0 0;">0.334</div><div class="t" style="left:1229.50px;top:414.34px;font-size:12.00px;color:#000;transform:scaleX(0.9200);transform-origin:0 0;">0.506</div><div class="t" style="left:1371.50px;top:414.34px;font-size:12.00px;color:#000;transform:scaleX(0.9200);transform-origin:0 0;">12.180</div><div class="b" style="left:990.00px;top:448.00px;width:528.00px;height:1.30px;background:#d6d6d6"></div><div class="b" style="left:1150.50px;top:431.50px;width:75.50px;height:15.50px;background:#f1dcab"></div><svg class="b" style="left:992px;top:433px" width="14" height="14"><rect x="0.5" y="0.5" width="13" height="13" fill="#fff" stroke="#5e5e5e" stroke-width="1"/><path d="M3 7 L5.6 10 L11 3.5" fill="none" stroke="#000" stroke-width="1.8"/></svg><div class="t" style="left:1031.50px;top:432.34px;font-size:12.00px;color:#000;transform:scaleX(0.9200);transform-origin:0 0;">152</div><div class="t" style="left:1087.50px;top:432.34px;font-size:12.00px;color:#000;transform:scaleX(0.9200);transform-origin:0 0;">37.8</div><div class="t" style="left:1151.00px;top:432.34px;font-size:12.00px;color:#000;transform:scaleX(0.9200);transform-origin:0 0;">0.335</div><div class="t" style="left:1229.50px;top:432.34px;font-size:12.00px;color:#000;transform:scaleX(0.9200);transform-origin:0 0;">0.477</div><div class="t" style="left:1371.50px;top:432.34px;font-size:12.00px;color:#000;transform:scaleX(0.9200);transform-origin:0 0;">12.189</div><div class="b" style="left:990.00px;top:466.00px;width:528.00px;height:1.30px;background:#d6d6d6"></div><div class="b" style="left:1150.50px;top:449.50px;width:75.50px;height:15.50px;background:#f1dcab"></div><svg class="b" style="left:992px;top:451px" width="14" height="14"><rect x="0.5" y="0.5" width="13" height="13" fill="#fff" stroke="#5e5e5e" stroke-width="1"/><path d="M3 7 L5.6 10 L11 3.5" fill="none" stroke="#000" stroke-width="1.8"/></svg><div class="t" style="left:1031.50px;top:450.34px;font-size:12.00px;color:#000;transform:scaleX(0.9200);transform-origin:0 0;">153</div><div class="t" style="left:1087.50px;top:450.34px;font-size:12.00px;color:#000;transform:scaleX(0.9200);transform-origin:0 0;">38.1</div><div class="t" style="left:1151.00px;top:450.34px;font-size:12.00px;color:#000;transform:scaleX(0.9200);transform-origin:0 0;">0.336</div><div class="t" style="left:1229.50px;top:450.34px;font-size:12.00px;color:#000;transform:scaleX(0.9200);transform-origin:0 0;">0.476</div><div class="t" style="left:1371.50px;top:450.34px;font-size:12.00px;color:#000;transform:scaleX(0.9200);transform-origin:0 0;">12.189</div><div class="b" style="left:990.00px;top:484.00px;width:528.00px;height:1.30px;background:#d6d6d6"></div><div class="b" style="left:1150.50px;top:467.50px;width:75.50px;height:15.50px;background:#f1dcab"></div><svg class="b" style="left:992px;top:469px" width="14" height="14"><rect x="0.5" y="0.5" width="13" height="13" fill="#fff" stroke="#5e5e5e" stroke-width="1"/><path d="M3 7 L5.6 10 L11 3.5" fill="none" stroke="#000" stroke-width="1.8"/></svg><div class="t" style="left:1031.50px;top:468.34px;font-size:12.00px;color:#000;transform:scaleX(0.9200);transform-origin:0 0;">154</div><div class="t" style="left:1087.50px;top:468.34px;font-size:12.00px;color:#000;transform:scaleX(0.9200);transform-origin:0 0;">38.3</div><div class="t" style="left:1151.00px;top:468.34px;font-size:12.00px;color:#000;transform:scaleX(0.9200);transform-origin:0 0;">0.337</div><div class="t" style="left:1229.50px;top:468.34px;font-size:12.00px;color:#000;transform:scaleX(0.9200);transform-origin:0 0;">0.483</div><div class="t" style="left:1371.50px;top:468.34px;font-size:12.00px;color:#000;transform:scaleX(0.9200);transform-origin:0 0;">12.219</div><div class="b" style="left:990.00px;top:502.00px;width:528.00px;height:1.30px;background:#d6d6d6"></div><div class="b" style="left:1150.50px;top:485.50px;width:75.50px;height:15.50px;background:#f1dcab"></div><svg class="b" style="left:992px;top:487px" width="14" height="14"><rect x="0.5" y="0.5" width="13" height="13" fill="#fff" stroke="#5e5e5e" stroke-width="1"/><path d="M3 7 L5.6 10 L11 3.5" fill="none" stroke="#000" stroke-width="1.8"/></svg><div class="t" style="left:1031.50px;top:486.34px;font-size:12.00px;color:#000;transform:scaleX(0.9200);transform-origin:0 0;">155</div><div class="t" style="left:1087.50px;top:486.34px;font-size:12.00px;color:#000;transform:scaleX(0.9200);transform-origin:0 0;">38.6</div><div class="t" style="left:1151.00px;top:486.34px;font-size:12.00px;color:#000;transform:scaleX(0.9200);transform-origin:0 0;">0.338</div><div class="t" style="left:1229.50px;top:486.34px;font-size:12.00px;color:#000;transform:scaleX(0.9200);transform-origin:0 0;">0.465</div><div class="t" style="left:1371.50px;top:486.34px;font-size:12.00px;color:#000;transform:scaleX(0.9200);transform-origin:0 0;">12.202</div><div class="b" style="left:990.00px;top:520.00px;width:528.00px;height:1.30px;background:#d6d6d6"></div><div class="b" style="left:1150.50px;top:503.50px;width:75.50px;height:15.50px;background:#f1dcab"></div><svg class="b" style="left:992px;top:505px" width="14" height="14"><rect x="0.5" y="0.5" width="13" height="13" fill="#fff" stroke="#5e5e5e" stroke-width="1"/><path d="M3 7 L5.6 10 L11 3.5" fill="none" stroke="#000" stroke-width="1.8"/></svg><div class="t" style="left:1031.50px;top:504.34px;font-size:12.00px;color:#000;transform:scaleX(0.9200);transform-origin:0 0;">156</div><div class="t" style="left:1087.50px;top:504.34px;font-size:12.00px;color:#000;transform:scaleX(0.9200);transform-origin:0 0;">38.8</div><div class="t" style="left:1151.00px;top:504.34px;font-size:12.00px;color:#000;transform:scaleX(0.9200);transform-origin:0 0;">0.338</div><div class="t" style="left:1229.50px;top:504.34px;font-size:12.00px;color:#000;transform:scaleX(0.9200);transform-origin:0 0;">0.448</div><div class="t" style="left:1371.50px;top:504.34px;font-size:12.00px;color:#000;transform:scaleX(0.9200);transform-origin:0 0;">12.212</div><div class="b" style="left:990.00px;top:538.00px;width:528.00px;height:1.30px;background:#d6d6d6"></div><div class="b" style="left:1150.50px;top:521.50px;width:75.50px;height:15.50px;background:#f1dcab"></div><svg class="b" style="left:992px;top:523px" width="14" height="14"><rect x="0.5" y="0.5" width="13" height="13" fill="#fff" stroke="#5e5e5e" stroke-width="1"/><path d="M3 7 L5.6 10 L11 3.5" fill="none" stroke="#000" stroke-width="1.8"/></svg><div class="t" style="left:1031.50px;top:522.34px;font-size:12.00px;color:#000;transform:scaleX(0.9200);transform-origin:0 0;">157</div><div class="t" style="left:1087.50px;top:522.34px;font-size:12.00px;color:#000;transform:scaleX(0.9200);transform-origin:0 0;">39.1</div><div class="t" style="left:1151.00px;top:522.34px;font-size:12.00px;color:#000;transform:scaleX(0.9200);transform-origin:0 0;">0.338</div><div class="t" style="left:1229.50px;top:522.34px;font-size:12.00px;color:#000;transform:scaleX(0.9200);transform-origin:0 0;">0.463</div><div class="t" style="left:1371.50px;top:522.34px;font-size:12.00px;color:#000;transform:scaleX(0.9200);transform-origin:0 0;">12.196</div><div class="b" style="left:990.00px;top:556.00px;width:528.00px;height:1.30px;background:#d6d6d6"></div><div class="b" style="left:1150.50px;top:539.50px;width:75.50px;height:15.50px;background:#f1dcab"></div><svg class="b" style="left:992px;top:541px" width="14" height="14"><rect x="0.5" y="0.5" width="13" height="13" fill="#fff" stroke="#5e5e5e" stroke-width="1"/><path d="M3 7 L5.6 10 L11 3.5" fill="none" stroke="#000" stroke-width="1.8"/></svg><div class="t" style="left:1031.50px;top:540.34px;font-size:12.00px;color:#000;transform:scaleX(0.9200);transform-origin:0 0;">158</div><div class="t" style="left:1087.50px;top:540.34px;font-size:12.00px;color:#000;transform:scaleX(0.9200);transform-origin:0 0;">39.3</div><div class="t" style="left:1151.00px;top:540.34px;font-size:12.00px;color:#000;transform:scaleX(0.9200);transform-origin:0 0;">0.339</div><div class="t" style="left:1229.50px;top:540.34px;font-size:12.00px;color:#000;transform:scaleX(0.9200);transform-origin:0 0;">0.456</div><div class="t" style="left:1371.50px;top:540.34px;font-size:12.00px;color:#000;transform:scaleX(0.9200);transform-origin:0 0;">12.241</div><div class="b" style="left:1029.50px;top:51.00px;width:1.20px;height:506.00px;background:#d4d4d4"></div><div class="b" style="left:1085.50px;top:51.00px;width:1.20px;height:506.00px;background:#d4d4d4"></div><div class="b" style="left:1149.20px;top:51.00px;width:1.20px;height:506.00px;background:#d4d4d4"></div><div class="b" style="left:1227.30px;top:51.00px;width:1.20px;height:506.00px;background:#d4d4d4"></div><div class="b" style="left:1369.40px;top:51.00px;width:1.20px;height:506.00px;background:#d4d4d4"></div><div class="b" style="left:1511.20px;top:51.00px;width:1.20px;height:506.00px;background:#d4d4d4"></div><div class="b" style="left:1518.00px;top:28.00px;width:17.00px;height:542.00px;background:#f0f0f0"></div><div class="b" style="left:1519.00px;top:467.00px;width:15.00px;height:86.00px;background:#cdcdcd"></div><svg class="b" style="left:1518px;top:52px" width="17" height="17"><path d="M4.5 10.5 L8.5 6.5 L12.5 10.5" fill="none" stroke="#a3a3a3" stroke-width="1.2"/></svg><svg class="b" style="left:1518px;top:553px" width="17" height="17"><path d="M4.5 6.5 L8.5 10.5 L12.5 6.5" fill="none" stroke="#a3a3a3" stroke-width="1.2"/></svg>
<div class="b" style="left:37.00px;top:581.00px;width:841.00px;height:319.00px;background:#fff"></div><svg class="b" style="left:0;top:575px" width="885" height="360" viewBox="0 575 885 360"><line x1="69.5" y1="581" x2="69.5" y2="900" stroke="#c4c4c4" stroke-dasharray="1 2"/><line x1="152.5" y1="581" x2="152.5" y2="900" stroke="#c4c4c4" stroke-dasharray="1 2"/><line x1="235.5" y1="581" x2="235.5" y2="900" stroke="#c4c4c4" stroke-dasharray="1 2"/><line x1="318.5" y1="581" x2="318.5" y2="900" stroke="#c4c4c4" stroke-dasharray="1 2"/><line x1="401.5" y1="581" x2="401.5" y2="900" stroke="#c4c4c4" stroke-dasharray="1 2"/><line x1="484.5" y1="581" x2="484.5" y2="900" stroke="#c4c4c4" stroke-dasharray="1 2"/><line x1="567.5" y1="581" x2="567.5" y2="900" stroke="#c4c4c4" stroke-dasharray="1 2"/><line x1="650.5" y1="581" x2="650.5" y2="900" stroke="#c4c4c4" stroke-dasharray="1 2"/><line x1="733.5" y1="581" x2="733.5" y2="900" stroke="#c4c4c4" stroke-dasharray="1 2"/><line x1="816.5" y1="581" x2="816.5" y2="900" stroke="#c4c4c4" stroke-dasharray="1 2"/><line x1="37" y1="589.5" x2="878" y2="589.5" stroke="#c4c4c4" stroke-dasharray="1 2"/><line x1="26" y1="589.5" x2="37" y2="589.5" stroke="#6a6a6a" stroke-width="1.2"/><line x1="37" y1="673.5" x2="878" y2="673.5" stroke="#c4c4c4" stroke-dasharray="1 2"/><line x1="26" y1="673.5" x2="37" y2="673.5" stroke="#6a6a6a" stroke-width="1.2"/><line x1="37" y1="756.5" x2="878" y2="756.5" stroke="#c4c4c4" stroke-dasharray="1 2"/><line x1="26" y1="756.5" x2="37" y2="756.5" stroke="#6a6a6a" stroke-width="1.2"/><line x1="37" y1="839.5" x2="878" y2="839.5" stroke="#c4c4c4" stroke-dasharray="1 2"/><line x1="26" y1="839.5" x2="37" y2="839.5" stroke="#6a6a6a" stroke-width="1.2"/><line x1="31" y1="606.5" x2="37" y2="606.5" stroke="#6a6a6a" stroke-width="1.2"/><line x1="31" y1="623.5" x2="37" y2="623.5" stroke="#6a6a6a" stroke-width="1.2"/><line x1="31" y1="639.5" x2="37" y2="639.5" stroke="#6a6a6a" stroke-width="1.2"/><line x1="31" y1="656.5" x2="37" y2="656.5" stroke="#6a6a6a" stroke-width="1.2"/><line x1="31" y1="689.5" x2="37" y2="689.5" stroke="#6a6a6a" stroke-width="1.2"/><line x1="31" y1="706.5" x2="37" y2="706.5" stroke="#6a6a6a" stroke-width="1.2"/><line x1="31" y1="723.5" x2="37" y2="723.5" stroke="#6a6a6a" stroke-width="1.2"/><line x1="31" y1="740.5" x2="37" y2="740.5" stroke="#6a6a6a" stroke-width="1.2"/><line x1="31" y1="773.5" x2="37" y2="773.5" stroke="#6a6a6a" stroke-width="1.2"/><line x1="31" y1="790.5" x2="37" y2="790.5" stroke="#6a6a6a" stroke-width="1.2"/><line x1="31" y1="806.5" x2="37" y2="806.5" stroke="#6a6a6a" stroke-width="1.2"/><line x1="31" y1="823.5" x2="37" y2="823.5" stroke="#6a6a6a" stroke-width="1.2"/><line x1="31" y1="856.5" x2="37" y2="856.5" stroke="#6a6a6a" stroke-width="1.2"/><line x1="31" y1="873.5" x2="37" y2="873.5" stroke="#6a6a6a" stroke-width="1.2"/><line x1="31" y1="890.5" x2="37" y2="890.5" stroke="#6a6a6a" stroke-width="1.2"/><line x1="36.5" y1="900" x2="36.5" y2="905" stroke="#6a6a6a" stroke-width="1.2"/><line x1="52.5" y1="900" x2="52.5" y2="905" stroke="#6a6a6a" stroke-width="1.2"/><line x1="69.5" y1="900" x2="69.5" y2="910" stroke="#6a6a6a" stroke-width="1.2"/><line x1="86.5" y1="900" x2="86.5" y2="905" stroke="#6a6a6a" stroke-width="1.2"/><line x1="102.5" y1="900" x2="102.5" y2="905" stroke="#6a6a6a" stroke-width="1.2"/><line x1="119.5" y1="900" x2="119.5" y2="905" stroke="#6a6a6a" stroke-width="1.2"/><line x1="135.5" y1="900" x2="135.5" y2="905" stroke="#6a6a6a" stroke-width="1.2"/><line x1="152.5" y1="900" x2="152.5" y2="910" stroke="#6a6a6a" stroke-width="1.2"/><line x1="169.5" y1="900" x2="169.5" y2="905" stroke="#6a6a6a" stroke-width="1.2"/><line x1="185.5" y1="900" x2="185.5" y2="905" stroke="#6a6a6a" stroke-width="1.2"/><line x1="202.5" y1="900" x2="202.5" y2="905" stroke="#6a6a6a" stroke-width="1.2"/><line x1="218.5" y1="900" x2="218.5" y2="905" stroke="#6a6a6a" stroke-width="1.2"/><line x1="235.5" y1="900" x2="235.5" y2="910" stroke="#6a6a6a" stroke-width="1.2"/><line x1="252.5" y1="900" x2="252.5" y2="905" stroke="#6a6a6a" stroke-width="1.2"/><line x1="268.5" y1="900" x2="268.5" y2="905" stroke="#6a6a6a" stroke-width="1.2"/><line x1="285.5" y1="900" x2="285.5" y2="905" stroke="#6a6a6a" stroke-width="1.2"/><line x1="301.5" y1="900" x2="301.5" y2="905" stroke="#6a6a6a" stroke-width="1.2"/><line x1="318.5" y1="900" x2="318.5" y2="910" stroke="#6a6a6a" stroke-width="1.2"/><line x1="335.5" y1="900" x2="335.5" y2="905" stroke="#6a6a6a" stroke-width="1.2"/><line x1="351.5" y1="900" x2="351.5" y2="905" stroke="#6a6a6a" stroke-width="1.2"/><line x1="368.5" y1="900" x2="368.5" y2="905" stroke="#6a6a6a" stroke-width="1.2"/><line x1="385.5" y1="900" x2="385.5" y2="905" stroke="#6a6a6a" stroke-width="1.2"/><line x1="401.5" y1="900" x2="401.5" y2="910" stroke="#6a6a6a" stroke-width="1.2"/><line x1="418.5" y1="900" x2="418.5" y2="905" stroke="#6a6a6a" stroke-width="1.2"/><line x1="434.5" y1="900" x2="434.5" y2="905" stroke="#6a6a6a" stroke-width="1.2"/><line x1="451.5" y1="900" x2="451.5" y2="905" stroke="#6a6a6a" stroke-width="1.2"/><line x1="468.5" y1="900" x2="468.5" y2="905" stroke="#6a6a6a" stroke-width="1.2"/><line x1="484.5" y1="900" x2="484.5" y2="910" stroke="#6a6a6a" stroke-width="1.2"/><line x1="501.5" y1="900" x2="501.5" y2="905" stroke="#6a6a6a" stroke-width="1.2"/><line x1="517.5" y1="900" x2="517.5" y2="905" stroke="#6a6a6a" stroke-width="1.2"/><line x1="534.5" y1="900" x2="534.5" y2="905" stroke="#6a6a6a" stroke-width="1.2"/><line x1="551.5" y1="900" x2="551.5" y2="905" stroke="#6a6a6a" stroke-width="1.2"/><line x1="567.5" y1="900" x2="567.5" y2="910" stroke="#6a6a6a" stroke-width="1.2"/><line x1="584.5" y1="900" x2="584.5" y2="905" stroke="#6a6a6a" stroke-width="1.2"/><line x1="600.5" y1="900" x2="600.5" y2="905" stroke="#6a6a6a" stroke-width="1.2"/><line x1="617.5" y1="900" x2="617.5" y2="905" stroke="#6a6a6a" stroke-width="1.2"/><line x1="634.5" y1="900" x2="634.5" y2="905" stroke="#6a6a6a" stroke-width="1.2"/><line x1="650.5" y1="900" x2="650.5" y2="910" stroke="#6a6a6a" stroke-width="1.2"/><line x1="667.5" y1="900" x2="667.5" y2="905" stroke="#6a6a6a" stroke-width="1.2"/><line x1="684.5" y1="900" x2="684.5" y2="905" stroke="#6a6a6a" stroke-width="1.2"/><line x1="700.5" y1="900" x2="700.5" y2="905" stroke="#6a6a6a" stroke-width="1.2"/><line x1="717.5" y1="900" x2="717.5" y2="905" stroke="#6a6a6a" stroke-width="1.2"/><line x1="733.5" y1="900" x2="733.5" y2="910" stroke="#6a6a6a" stroke-width="1.2"/><line x1="750.5" y1="900" x2="750.5" y2="905" stroke="#6a6a6a" stroke-width="1.2"/><line x1="767.5" y1="900" x2="767.5" y2="905" stroke="#6a6a6a" stroke-width="1.2"/><line x1="783.5" y1="900" x2="783.5" y2="905" stroke="#6a6a6a" stroke-width="1.2"/><line x1="800.5" y1="900" x2="800.5" y2="905" stroke="#6a6a6a" stroke-width="1.2"/><line x1="816.5" y1="900" x2="816.5" y2="910" stroke="#6a6a6a" stroke-width="1.2"/><line x1="833.5" y1="900" x2="833.5" y2="905" stroke="#6a6a6a" stroke-width="1.2"/><line x1="850.5" y1="900" x2="850.5" y2="905" stroke="#6a6a6a" stroke-width="1.2"/><line x1="866.5" y1="900" x2="866.5" y2="905" stroke="#6a6a6a" stroke-width="1.2"/><polygon points="37.0,800.4 43.0,807.0 50.8,812.0 60.0,818.6 69.0,822.5 74.3,797.0 78.2,783.4 83.4,810.0 86.0,815.0 95.1,814.0 105.5,809.5 110.7,812.0 118.5,822.0 129.0,826.0 140.7,834.0 160.2,835.0 186.2,838.0 199.3,841.0 216.2,843.0 225.3,843.0 231.8,838.0 244.8,840.0 264.4,838.0 273.5,838.0 275.2,836.0 281.7,830.3 289.5,833.0 301.2,839.4 316.9,835.5 323.4,836.0 324.7,844.6 361.2,847.0 369.0,855.0 380.7,856.0 400.2,846.0 422.3,838.0 432.8,840.0 452.3,837.0 478.3,832.0 488.8,826.0 494.0,812.0 495.3,777.0 499.2,745.0 503.0,713.7 505.1,672.5 509.4,655.0 511.6,622.5 514.9,676.8 520.0,745.0 523.6,755.4 523.8,754.5 526.2,731.3 527.8,724.0 530.4,741.0 531.8,759.2 532.5,763.8 535.6,777.3 537.7,784.4 540.8,795.0 541.9,793.1 544.0,789.6 544.5,788.8 547.1,797.1 549.2,792.9 549.7,791.9 554.4,811.7 556.5,814.2 560.6,819.0 564.8,813.1 565.8,811.7 571.0,810.6 572.0,805.7 574.2,795.0 576.8,772.0 578.3,767.2 579.4,763.8 581.5,775.2 582.5,787.7 587.7,795.0 592.9,786.7 597.1,785.6 599.2,784.2 600.2,783.5 600.8,772.8 602.3,743.0 603.3,741.0 604.4,746.9 605.8,764.3 607.5,776.2 608.7,771.0 610.6,745.5 611.7,735.5 612.5,743.4 613.8,757.0 614.7,772.6 617.9,791.9 620.0,790.3 626.2,785.6 628.3,787.1 633.5,791.1 634.6,791.9 637.7,778.1 641.4,761.7 648.1,786.7 649.2,788.7 654.4,798.1 655.5,796.8 658.5,767.0 659.6,776.1 660.4,783.1 661.5,793.3 663.8,795.0 667.9,799.8 670.0,802.3 675.2,795.0 676.2,792.5 680.4,782.4 682.5,777.3 684.6,784.9 689.8,803.9 690.8,807.5 697.1,799.2 700.2,782.1 701.2,776.2 702.9,759.3 705.4,731.5 707.5,737.6 707.9,740.1 710.6,749.6 712.7,756.9 713.8,760.6 716.0,720.0 718.5,635.8 722.7,735.0 727.5,685.0 736.2,785.0 741.5,779.0 748.8,796.0 754.0,794.0 757.0,760.0 762.3,792.0 768.5,788.0 773.3,710.0 780.0,773.0 796.7,746.0 805.0,735.0 813.3,631.0 815.4,603.0 819.3,640.0 823.0,660.0 829.5,678.0 833.0,676.0 846.7,664.0 855.0,650.0 864.4,649.0 869.6,596.0 875.8,631.0 878.0,635.0 878.0,696.0 875.8,694.0 869.6,680.0 864.4,706.7 855.0,710.8 846.7,719.0 833.0,728.0 829.5,730.0 823.0,729.0 819.3,731.0 815.4,740.0 813.3,748.0 805.0,756.7 796.7,783.8 780.0,798.3 773.3,723.3 768.5,804.6 762.3,808.8 757.0,777.5 754.0,815.0 748.8,817.0 741.5,815.0 736.2,810.8 727.5,700.0 722.7,760.8 718.5,670.0 716.0,770.0 713.8,780.0 712.7,784.6 710.6,780.4 707.9,759.4 707.5,756.3 705.4,740.0 702.9,766.4 701.2,783.9 700.2,795.0 697.1,811.7 690.8,817.1 689.8,817.9 684.6,803.3 682.5,801.6 680.4,800.0 676.2,822.0 675.2,821.6 670.0,819.8 667.9,819.0 663.8,800.0 661.5,796.6 660.4,795.0 659.6,795.8 658.5,796.9 655.5,799.9 654.4,801.0 649.2,809.6 648.1,805.8 641.4,782.5 637.7,792.9 634.6,806.8 633.5,811.7 628.3,808.5 626.2,807.2 620.0,803.3 617.9,797.0 614.7,778.6 613.8,773.2 612.5,767.2 611.7,767.7 610.6,770.0 608.7,776.1 607.5,780.0 605.8,773.4 604.4,768.0 603.3,763.8 602.3,760.0 600.8,776.0 600.2,785.5 599.2,793.0 597.1,791.7 592.9,789.0 587.7,797.0 582.5,789.7 581.5,778.0 579.4,778.7 578.3,779.0 576.8,785.6 574.2,797.0 572.0,809.6 571.0,812.6 565.8,823.0 564.8,825.2 560.6,825.7 556.5,826.2 554.4,825.7 549.7,824.3 549.2,824.2 547.1,816.6 544.5,807.2 544.0,805.4 541.9,820.0 540.8,820.5 537.7,822.0 535.6,819.3 532.5,815.4 531.8,814.5 530.4,812.7 527.8,801.6 526.2,795.0 523.8,785.2 523.6,784.4 520.0,770.0 514.9,730.0 511.6,690.0 509.4,700.0 505.1,746.0 503.0,756.0 499.2,790.0 495.3,806.0 494.0,817.3 488.8,830.3 478.3,835.5 452.3,840.0 432.8,845.0 422.3,856.4 400.2,864.2 380.7,871.3 369.0,869.0 361.2,854.0 324.7,862.9 323.4,855.0 316.9,847.0 301.2,848.0 289.5,852.0 281.7,860.3 275.2,850.0 273.5,845.0 264.4,844.0 244.8,846.5 231.8,846.5 225.3,850.0 216.2,850.0 199.3,846.0 186.2,843.5 160.2,839.5 140.7,838.5 129.0,832.0 118.5,828.0 110.7,819.0 105.5,818.0 95.1,826.0 86.0,826.5 83.4,826.0 78.2,794.0 74.3,811.0 69.0,828.0 60.0,830.0 50.8,827.7 43.0,826.4 37.0,825.0" fill="#000" stroke="#000" stroke-width="1.8" stroke-linejoin="round"/><polygon points="37.0,800.4 43.0,807.0 50.8,812.0 60.0,818.6 69.0,822.5 74.3,799.0 78.2,788.6 83.4,812.0 86.0,819.9 95.1,816.0 105.5,812.0 110.7,814.7 118.5,823.8 129.0,827.7 140.7,835.5 160.2,836.8 186.2,840.7 199.3,843.3 216.2,846.0 225.3,845.0 231.8,840.7 244.8,842.0 264.4,840.7 273.5,840.7 275.2,842.0 281.7,844.6 289.5,846.0 301.2,843.3 316.9,840.7 323.4,845.0 324.7,851.0 361.2,847.3 369.0,860.0 380.7,861.0 400.2,856.0 422.3,849.0 432.8,842.0 452.3,838.0 478.3,833.0 488.8,827.7 494.0,814.7 495.3,804.3 499.2,786.0 503.0,752.8 505.1,742.0 509.4,694.0 511.6,681.0 514.9,711.5 520.0,745.0 523.6,755.4 523.8,754.5 526.2,742.9 527.8,732.5 530.4,750.2 531.8,759.2 532.5,763.8 535.6,777.3 537.7,784.4 540.8,795.0 541.9,793.1 544.0,789.6 544.5,788.8 547.1,797.1 549.2,792.9 549.7,791.9 554.4,811.7 556.5,814.2 560.6,819.0 564.8,813.1 565.8,811.7 571.0,810.6 572.0,805.7 574.2,795.0 576.8,772.0 578.3,767.2 579.4,763.8 581.5,775.2 582.5,787.7 587.7,795.0 592.9,786.7 597.1,785.6 599.2,784.2 600.2,783.5 600.8,772.8 602.3,746.0 603.3,750.0 604.4,754.4 605.8,764.3 607.5,776.2 608.7,771.0 610.6,762.7 611.7,764.2 612.5,765.2 613.8,766.9 614.7,772.6 617.9,791.9 620.0,790.3 626.2,785.6 628.3,787.1 633.5,791.1 634.6,791.9 637.7,778.1 641.4,761.7 648.1,786.7 649.2,788.7 654.4,798.1 655.5,796.8 658.5,793.2 659.6,791.9 660.4,792.5 661.5,793.3 663.8,795.0 667.9,799.8 670.0,802.3 675.2,795.0 676.2,792.5 680.4,782.4 682.5,777.3 684.6,784.9 689.8,803.9 690.8,807.5 697.1,799.2 700.2,782.1 701.2,776.2 702.9,759.3 705.4,733.5 707.5,738.8 707.9,740.1 710.6,749.6 712.7,756.9 713.8,760.6 716.0,720.0 718.5,652.5 722.7,735.8 727.5,685.8 736.2,785.8 741.5,779.6 748.8,796.2 754.0,794.0 757.0,760.8 762.3,792.0 768.5,788.0 773.3,710.8 780.0,773.3 796.7,746.2 805.0,735.8 813.3,631.7 815.4,603.0 819.3,640.0 823.0,660.0 829.5,678.0 833.0,676.0 846.7,664.0 855.0,650.4 864.4,649.4 869.6,596.2 875.8,631.7 878.0,635.8 878.0,637.4 875.8,633.3 869.6,597.9 864.4,651.0 855.0,652.0 846.7,665.6 833.0,677.6 829.5,679.6 823.0,661.6 819.3,641.6 815.4,604.6 813.3,633.3 805.0,737.4 796.7,747.9 780.0,774.9 773.3,712.4 768.5,789.6 762.3,793.6 757.0,762.4 754.0,795.6 748.8,797.9 741.5,781.2 736.2,787.4 727.5,687.4 722.7,737.4 718.5,654.1 716.0,721.0 713.8,761.6 712.7,757.9 710.6,750.6 707.9,741.1 707.5,739.8 705.4,734.5 702.9,760.3 701.2,777.2 700.2,783.1 697.1,800.2 690.8,808.5 689.8,804.9 684.6,785.9 682.5,778.3 680.4,783.4 676.2,793.5 675.2,796.0 670.0,803.3 667.9,800.8 663.8,796.0 661.5,794.3 660.4,793.5 659.6,792.9 658.5,794.2 655.5,797.8 654.4,799.1 649.2,789.7 648.1,787.7 641.4,762.7 637.7,779.1 634.6,792.9 633.5,792.1 628.3,788.1 626.2,786.6 620.0,791.3 617.9,792.9 614.7,773.6 613.8,767.9 612.5,766.2 611.7,765.2 610.6,763.7 608.7,772.0 607.5,777.2 605.8,765.3 604.4,755.4 603.3,751.0 602.3,747.0 600.8,773.8 600.2,784.5 599.2,785.2 597.1,786.6 592.9,787.7 587.7,796.0 582.5,788.7 581.5,776.2 579.4,764.8 578.3,768.2 576.8,773.0 574.2,796.0 572.0,806.7 571.0,811.6 565.8,812.7 564.8,814.1 560.6,820.0 556.5,815.2 554.4,812.7 549.7,792.9 549.2,793.9 547.1,798.1 544.5,789.8 544.0,790.6 541.9,794.1 540.8,796.0 537.7,785.4 535.6,778.3 532.5,764.8 531.8,760.2 530.4,751.2 527.8,733.5 526.2,743.9 523.8,755.5 523.6,756.4 520.0,746.0 514.9,713.1 511.6,682.6 509.4,695.6 505.1,743.6 503.0,754.4 499.2,787.6 495.3,805.9 494.0,816.3 488.8,829.3 478.3,834.6 452.3,839.6 432.8,843.6 422.3,854.0 400.2,863.0 380.7,868.0 369.0,868.0 361.2,853.8 324.7,861.6 323.4,852.0 316.9,846.0 301.2,847.0 289.5,850.0 281.7,855.0 275.2,846.0 273.5,842.5 264.4,842.3 244.8,843.6 231.8,842.3 225.3,846.6 216.2,847.6 199.3,844.9 186.2,842.3 160.2,838.4 140.7,837.1 129.0,831.6 118.5,827.7 110.7,818.6 105.5,817.0 95.1,822.0 86.0,825.0 83.4,825.0 78.2,792.6 74.3,809.0 69.0,826.4 60.0,823.8 50.8,821.0 43.0,816.0 37.0,812.0" fill="#daa520" stroke="#daa520" stroke-width="1.1" stroke-linejoin="round"/><polyline points="826.5,724.0 829.5,727.6 838.5,719.5 851.3,713.4 864.2,704.0" fill="none" stroke="#fff" stroke-width="0.9" opacity="0.75"/><polyline points="827.0,722.4 829.5,722.8 838.5,717.9 851.3,708.6 864.2,702.4" fill="none" stroke="#fff" stroke-width="0.9" opacity="0.75"/><polyline points="827.5,717.6 829.5,721.2 838.5,713.1 851.3,707.0 864.2,697.6" fill="none" stroke="#fff" stroke-width="0.9" opacity="0.75"/><polyline points="828.0,716.0 829.5,716.4 838.5,711.5 851.3,702.2 864.2,696.0" fill="none" stroke="#fff" stroke-width="0.9" opacity="0.75"/><polyline points="828.5,711.2 829.5,714.8 838.5,706.7 851.3,700.6 864.2,691.2" fill="none" stroke="#fff" stroke-width="0.9" opacity="0.75"/><polyline points="829.0,709.6 829.5,710.0 838.5,705.1 851.3,695.8 864.2,689.6" fill="none" stroke="#fff" stroke-width="0.9" opacity="0.75"/><polyline points="829.5,704.8 829.5,708.4 838.5,700.3 851.3,694.2 864.2,684.8" fill="none" stroke="#fff" stroke-width="0.9" opacity="0.75"/><polyline points="830.0,703.2 829.5,703.6 838.5,698.7 851.3,689.4 864.2,683.2" fill="none" stroke="#fff" stroke-width="0.9" opacity="0.75"/><polyline points="830.5,698.4 829.5,702.0 838.5,693.9 851.3,687.8 864.2,678.4" fill="none" stroke="#fff" stroke-width="0.9" opacity="0.75"/><rect x="527" y="581" width="3" height="319" fill="#ff2020" opacity="0.65"/></svg><div class="t" style="left:3.50px;top:583.84px;font-size:12.00px;color:#000;transform:scaleX(0.9419);transform-origin:0 0;">0,75</div><div class="t" style="left:9.50px;top:666.84px;font-size:12.00px;color:#000;transform:scaleX(0.9591);transform-origin:0 0;">0,5</div><div class="t" style="left:3.50px;top:750.34px;font-size:12.00px;color:#000;transform:scaleX(0.9419);transform-origin:0 0;">0,25</div><div class="t" style="left:18.83px;top:833.84px;font-size:12.00px;color:#000;">0</div><div class="t" style="left:14px;top:654px;font-size:12px;transform:rotate(-90deg);transform-origin:0 0">Abs</div><div class="t" style="left:56.15px;top:910.84px;font-size:12.00px;color:#000;transform:scaleX(0.9926);transform-origin:0 0;">3000</div><div class="t" style="left:139.21px;top:910.84px;font-size:12.00px;color:#000;transform:scaleX(0.9926);transform-origin:0 0;">2750</div><div class="t" style="left:222.28px;top:910.84px;font-size:12.00px;color:#000;transform:scaleX(0.9926);transform-origin:0 0;">2500</div><div class="t" style="left:305.34px;top:910.84px;font-size:12.00px;color:#000;transform:scaleX(0.9926);transform-origin:0 0;">2250</div><div class="t" style="left:388.40px;top:910.84px;font-size:12.00px;color:#000;transform:scaleX(0.9926);transform-origin:0 0;">2000</div><div class="t" style="left:471.46px;top:910.84px;font-size:12.00px;color:#000;transform:scaleX(0.9926);transform-origin:0 0;">1750</div><div class="t" style="left:554.52px;top:910.84px;font-size:12.00px;color:#000;transform:scaleX(0.9926);transform-origin:0 0;">1500</div><div class="t" style="left:637.59px;top:910.84px;font-size:12.00px;color:#000;transform:scaleX(0.9926);transform-origin:0 0;">1250</div><div class="t" style="left:720.65px;top:910.84px;font-size:12.00px;color:#000;transform:scaleX(0.9926);transform-origin:0 0;">1000</div><div class="t" style="left:806.50px;top:910.84px;font-size:12.00px;color:#000;">750</div><div class="t" style="left:763.00px;top:910.84px;font-size:12.00px;color:#000;transform:scaleX(0.9806);transform-origin:0 0;">1/cm</div>
<div class="b" style="left:885.00px;top:581.00px;width:655.00px;height:344.00px;background:#fff"></div><svg class="b" style="left:885px;top:581px" width="655" height="344" viewBox="885 581 655 344"><defs><linearGradient id="g3" gradientUnits="userSpaceOnUse" x1="1232" y1="684" x2="1186" y2="808"><stop offset="0" stop-color="#c8e614"/><stop offset="0.14" stop-color="#74d424"/><stop offset="0.28" stop-color="#3a9a50"/><stop offset="0.42" stop-color="#2a7890"/><stop offset="0.56" stop-color="#1236d6"/><stop offset="0.7" stop-color="#4a18e0"/><stop offset="0.84" stop-color="#b020f0"/><stop offset="1" stop-color="#ff30f0"/></linearGradient><linearGradient id="g2" gradientUnits="userSpaceOnUse" x1="1260" y1="655" x2="1248" y2="705"><stop offset="0" stop-color="#d0400c"/><stop offset="0.35" stop-color="#9a5a22"/><stop offset="0.7" stop-color="#5e8a34"/><stop offset="1" stop-color="#36a848"/></linearGradient><linearGradient id="g1" gradientUnits="userSpaceOnUse" x1="1280" y1="622" x2="1268" y2="690"><stop offset="0" stop-color="#e6b4b4"/><stop offset="0.3" stop-color="#d83434"/><stop offset="0.6" stop-color="#d81010"/><stop offset="1" stop-color="#d84a10"/></linearGradient><linearGradient id="gL" gradientUnits="userSpaceOnUse" x1="1150" y1="705" x2="1096" y2="832"><stop offset="0" stop-color="#e8a020"/><stop offset="0.1" stop-color="#a8d820"/><stop offset="0.2" stop-color="#3ed83a"/><stop offset="0.3" stop-color="#22b89a"/><stop offset="0.42" stop-color="#1a90e0"/><stop offset="0.58" stop-color="#2846e0"/><stop offset="0.74" stop-color="#8020d8"/><stop offset="0.86" stop-color="#d020d0"/><stop offset="1" stop-color="#a01070"/></linearGradient><linearGradient id="gR" gradientUnits="userSpaceOnUse" x1="0" y1="684" x2="0" y2="801"><stop offset="0" stop-color="#d86a20"/><stop offset="0.3" stop-color="#a06830"/><stop offset="0.4" stop-color="#30c060"/><stop offset="0.55" stop-color="#20b080"/><stop offset="0.75" stop-color="#108888"/><stop offset="1" stop-color="#0a1a40"/></linearGradient><linearGradient id="gR2" gradientUnits="userSpaceOnUse" x1="0" y1="700" x2="0" y2="782"><stop offset="0" stop-color="#c8502a"/><stop offset="0.42" stop-color="#985030"/><stop offset="0.58" stop-color="#30b050"/><stop offset="0.78" stop-color="#108080"/><stop offset="1" stop-color="#0a1438"/></linearGradient><linearGradient id="gM" gradientUnits="userSpaceOnUse" x1="1250" y1="800" x2="1236" y2="850"><stop offset="0" stop-color="#b028f0"/><stop offset="0.35" stop-color="#f038f8"/><stop offset="1" stop-color="#d02cc8"/></linearGradient><pattern id="stripes2" width="4" height="10" patternUnits="userSpaceOnUse"><rect x="0" y="0" width="1.2" height="10" fill="#300030" opacity="0.35"/></pattern><pattern id="stripes" width="3" height="10" patternUnits="userSpaceOnUse"><rect x="0" y="0" width="1.4" height="10" fill="#000" opacity="0.38"/></pattern></defs><polygon points="1047.3,637.0 1212.5,607.3 1214.0,745.0 1068.6,823.5" fill="#f8f8f8" stroke="#c8c8c8" stroke-width="1"/><polygon points="1212.5,607.3 1360.4,644.8 1341.7,837.7 1214.0,745.0" fill="#f8f8f8" stroke="#c8c8c8" stroke-width="1"/><polyline points="1065.6,797.5 1213.8,725.2 1344.2,811.4" fill="none" stroke="#d0d0d0" stroke-width="1"/><polyline points="1062.4,768.9 1213.5,703.7 1347.1,782.4" fill="none" stroke="#d0d0d0" stroke-width="1"/><polyline points="1059.0,739.2 1213.3,681.5 1350.0,751.8" fill="none" stroke="#d0d0d0" stroke-width="1"/><polyline points="1054.9,703.8 1213.0,655.5 1353.6,715.1" fill="none" stroke="#d0d0d0" stroke-width="1"/><polyline points="1050.9,668.7 1212.7,630.0 1357.2,678.3" fill="none" stroke="#d0d0d0" stroke-width="1"/><line x1="1078.4" y1="818.2" x2="1058.9" y2="634.9" stroke="#d0d0d0"/><line x1="1113.4" y1="799.3" x2="1099.5" y2="627.6" stroke="#d0d0d0"/><line x1="1146.6" y1="781.4" x2="1137.3" y2="620.8" stroke="#d0d0d0"/><line x1="1177.3" y1="764.8" x2="1171.9" y2="614.6" stroke="#d0d0d0"/><line x1="1206.3" y1="749.2" x2="1204.0" y2="608.8" stroke="#d0d0d0"/><line x1="1220.2" y1="749.5" x2="1219.3" y2="609.0" stroke="#d0d0d0"/><line x1="1241.6" y1="765.0" x2="1243.2" y2="615.1" stroke="#d0d0d0"/><line x1="1264.0" y1="781.3" x2="1268.7" y2="621.6" stroke="#d0d0d0"/><line x1="1288.9" y1="799.3" x2="1297.4" y2="628.8" stroke="#d0d0d0"/><line x1="1313.9" y1="817.5" x2="1327.0" y2="636.3" stroke="#d0d0d0"/><polyline points="1068.6,823.5 1184.5,919.8 1341.7,837.7" fill="none" stroke="#c4c4c4" stroke-width="1"/><polygon points="1205.6,618.8 1206.7,613.5 1209.8,612.7 1212.9,608.9 1216.0,611.9 1219.0,613.5 1221.5,616.4 1224.0,613.5 1226.4,614.9 1228.8,615.6 1231.1,619.1 1233.5,617.7 1236.1,621.2 1238.6,621.4 1241.2,623.4 1243.8,625.0 1246.5,629.4 1249.2,629.2 1252.0,631.2 1255.2,630.2 1257.7,631.6 1260.2,632.7 1262.7,635.9 1265.2,635.2 1267.7,636.5 1270.0,637.9 1272.3,638.6 1274.6,640.0 1276.9,640.7 1279.2,641.7 1281.7,644.9 1284.2,644.2 1286.7,649.2 1289.2,646.7 1291.7,648.0 1294.2,650.2 1296.7,651.3 1299.2,654.0 1301.7,654.6 1304.2,656.2 1306.8,661.2 1309.4,660.4 1312.0,666.8 1330.2,677.0 1339.6,677.0 1350.0,664.6 1351.0,700.0 1345.0,718.0 1330.0,708.0 1309.0,682.0 1273.0,667.0 1234.0,654.0 1205.0,648.0" fill="url(#g1)"/><polygon points="1195.0,646.0 1200.0,647.0 1234.0,654.0 1273.0,667.0 1304.0,677.0 1309.0,680.0 1308.0,689.0 1299.0,704.0 1288.0,714.0 1273.0,709.0 1252.0,700.0 1240.0,701.0 1217.0,692.0 1196.0,681.0 1195.0,681.0" fill="url(#g2)"/><polygon points="1307.0,682.0 1318.0,690.0 1330.0,702.0 1332.0,706.0 1332.0,760.0 1330.0,790.0 1325.0,801.0 1322.0,800.0 1318.0,794.0 1312.0,790.0 1307.0,760.0" fill="url(#gR)"/><polygon points="1329.0,705.0 1345.0,714.0 1352.0,700.0 1353.0,730.0 1351.0,745.0 1345.0,770.0 1337.0,782.0 1329.0,780.0" fill="url(#gR2)"/><polygon points="1348,694 1356,700 1355,728 1349,732" fill="#a8c828"/><polygon points="1168.0,671.0 1175.0,672.0 1196.0,681.0 1217.0,692.0 1240.0,701.0 1252.0,700.0 1273.0,709.0 1288.0,714.0 1299.0,704.0 1309.0,684.0 1309.0,720.0 1306.0,760.0 1300.0,790.0 1296.0,830.0 1290.0,846.0 1281.0,857.0 1260.0,850.0 1240.0,838.0 1212.0,822.0 1206.0,800.0 1190.0,785.0 1168.0,770.0" fill="url(#g3)"/><polygon points="1200.0,776.0 1231.0,793.0 1262.0,812.0 1296.0,830.0 1290.0,846.0 1281.0,857.0 1260.0,850.0 1240.0,838.0 1212.0,822.0 1206.0,800.0 1200.0,790.0" fill="url(#gM)"/><polygon points="1200.0,776.0 1231.0,793.0 1262.0,812.0 1296.0,830.0 1290.0,846.0 1281.0,857.0 1260.0,850.0 1240.0,838.0 1212.0,822.0 1206.0,800.0 1200.0,790.0" fill="url(#stripes2)"/><polygon points="1308.0,682.0 1310.0,682.0 1308.0,720.0 1307.0,816.0 1299.0,812.0 1302.0,760.0 1306.0,720.0" fill="#1a0c2c"/><polygon points="1207.0,828.0 1225.0,834.0 1240.0,840.0 1246.0,853.0 1236.0,853.0 1220.0,846.0 1208.0,853.0" fill="#0c1a48"/><polygon points="1073.3,696.0 1075.2,704.3 1077.0,703.2 1079.1,698.3 1081.1,685.1 1083.2,675.4 1085.8,709.0 1087.7,697.9 1089.5,678.9 1091.8,697.0 1094.2,704.0 1096.1,703.9 1098.0,699.8 1100.2,709.0 1102.5,706.9 1104.3,710.4 1106.2,710.0 1108.0,719.6 1109.8,714.3 1112.4,717.5 1115.0,711.7 1117.6,717.8 1120.2,722.4 1122.1,722.4 1124.1,720.1 1126.0,718.5 1129.6,728.7 1131.7,735.4 1133.7,735.5 1135.8,738.5 1137.8,743.3 1139.9,738.9 1141.9,743.1 1143.9,738.7 1146.0,742.8 1148.0,739.4 1150.0,743.0 1152.0,732.0 1154.3,746.3 1156.7,747.1 1158.8,749.4 1160.8,746.0 1162.9,747.1 1164.9,744.2 1167.0,741.8 1168.0,754.0 1170.1,761.3 1172.2,756.9 1174.3,764.9 1176.4,758.9 1178.5,762.0 1180.4,765.4 1182.3,764.4 1184.2,771.1 1186.1,768.4 1188.0,771.7 1190.0,775.0 1192.0,775.4 1194.0,783.4 1196.0,780.3 1198.0,783.4 1200.0,784.3 1202.2,793.5 1204.3,788.9 1206.5,793.8 1208.6,795.3 1210.8,798.3 1212.9,804.0 1214.9,807.2 1217.0,814.0 1212.0,826.0 1208.8,833.3 1207.7,852.0 1205.6,885.4 1200.4,893.8 1194.2,904.2 1189.0,914.6 1181.7,901.0 1168.0,890.6 1159.8,885.4 1144.2,881.2 1133.8,862.5 1123.3,861.5 1108.8,845.8 1099.4,838.5 1084.8,832.3 1079.6,827.0 1068.0,825.0 1068.0,806.2 1077.5,788.0 1080.6,772.5 1076.5,731.0 1074.4,710.0" fill="url(#gL)"/><polygon points="1073.3,696.0 1075.2,704.3 1077.0,703.2 1079.1,698.3 1081.1,685.1 1083.2,675.4 1085.8,709.0 1087.7,697.9 1089.5,678.9 1091.8,697.0 1094.2,704.0 1096.1,703.9 1098.0,699.8 1100.2,709.0 1102.5,706.9 1104.3,710.4 1106.2,710.0 1108.0,719.6 1109.8,714.3 1112.4,717.5 1115.0,711.7 1117.6,717.8 1120.2,722.4 1122.1,722.4 1124.1,720.1 1126.0,718.5 1129.6,728.7 1131.7,735.4 1133.7,735.5 1135.8,738.5 1137.8,743.3 1139.9,738.9 1141.9,743.1 1143.9,738.7 1146.0,742.8 1148.0,739.4 1150.0,743.0 1152.0,732.0 1154.3,746.3 1156.7,747.1 1158.8,749.4 1160.8,746.0 1162.9,747.1 1164.9,744.2 1167.0,741.8 1168.0,754.0 1170.1,761.3 1172.2,756.9 1174.3,764.9 1176.4,758.9 1178.5,762.0 1180.4,765.4 1182.3,764.4 1184.2,771.1 1186.1,768.4 1188.0,771.7 1190.0,775.0 1192.0,775.4 1194.0,783.4 1196.0,780.3 1198.0,783.4 1200.0,784.3 1202.2,793.5 1204.3,788.9 1206.5,793.8 1208.6,795.3 1210.8,798.3 1212.9,804.0 1214.9,807.2 1217.0,814.0 1212.0,826.0 1208.8,833.3 1207.7,852.0 1205.6,885.4 1200.4,893.8 1194.2,904.2 1189.0,914.6 1181.7,901.0 1168.0,890.6 1159.8,885.4 1144.2,881.2 1133.8,862.5 1123.3,861.5 1108.8,845.8 1099.4,838.5 1084.8,832.3 1079.6,827.0 1068.0,825.0 1068.0,806.2 1077.5,788.0 1080.6,772.5 1076.5,731.0 1074.4,710.0" fill="url(#stripes)"/><clipPath id="c3"><polygon points="1168.0,671.0 1175.0,672.0 1196.0,681.0 1217.0,692.0 1240.0,701.0 1252.0,700.0 1273.0,709.0 1288.0,714.0 1299.0,704.0 1309.0,684.0 1309.0,720.0 1306.0,760.0 1300.0,790.0 1296.0,830.0 1290.0,846.0 1281.0,857.0 1260.0,850.0 1240.0,838.0 1212.0,822.0 1206.0,800.0 1190.0,785.0 1168.0,770.0"/></clipPath><g clip-path="url(#c3)" stroke="#000" stroke-width="1" stroke-dasharray="4 1.5 1.5 1.5"><polyline fill="none" points="1168,688.5 1240,717.3 1305,734.9"/><polyline fill="none" points="1168,706.0 1240,734.8 1305,752.4"/><polyline fill="none" points="1168,724.0 1240,752.8 1305,770.4"/><polyline fill="none" points="1168,742.0 1240,770.8 1305,788.4"/><polyline fill="none" points="1168,761.0 1240,789.8 1305,807.4"/><polyline fill="none" points="1168,780.0 1240,808.8 1305,826.4"/></g><clipPath id="c12"><polygon points="1205.6,618.8 1206.7,613.5 1209.8,612.7 1212.9,608.9 1216.0,611.9 1219.0,613.5 1221.5,616.4 1224.0,613.5 1226.4,614.9 1228.8,615.6 1231.1,619.1 1233.5,617.7 1236.1,621.2 1238.6,621.4 1241.2,623.4 1243.8,625.0 1246.5,629.4 1249.2,629.2 1252.0,631.2 1255.2,630.2 1257.7,631.6 1260.2,632.7 1262.7,635.9 1265.2,635.2 1267.7,636.5 1270.0,637.9 1272.3,638.6 1274.6,640.0 1276.9,640.7 1279.2,641.7 1281.7,644.9 1284.2,644.2 1286.7,649.2 1289.2,646.7 1291.7,648.0 1294.2,650.2 1296.7,651.3 1299.2,654.0 1301.7,654.6 1304.2,656.2 1306.8,661.2 1309.4,660.4 1312.0,666.8 1330.2,677.0 1339.6,677.0 1350.0,664.6 1351.0,700.0 1345.0,718.0 1330.0,708.0 1309.0,682.0 1273.0,667.0 1234.0,654.0 1205.0,648.0"/><polygon points="1195.0,646.0 1200.0,647.0 1234.0,654.0 1273.0,667.0 1304.0,677.0 1309.0,680.0 1308.0,689.0 1299.0,704.0 1288.0,714.0 1273.0,709.0 1252.0,700.0 1240.0,701.0 1217.0,692.0 1196.0,681.0 1195.0,681.0"/></clipPath><g clip-path="url(#c12)" stroke="#000" stroke-width="1" stroke-dasharray="4 1.5 1.5 1.5"><line x1="1205.0" y1="626.0" x2="1292.0" y2="648.0"/><line x1="1205.0" y1="644.3" x2="1350.0" y2="688.5"/><line x1="1195.0" y1="664.0" x2="1350.0" y2="708.0"/><line x1="1194.0" y1="681.2" x2="1310.0" y2="715.0"/></g><clipPath id="cL"><polygon points="1073.3,696.0 1075.2,704.3 1077.0,703.2 1079.1,698.3 1081.1,685.1 1083.2,675.4 1085.8,709.0 1087.7,697.9 1089.5,678.9 1091.8,697.0 1094.2,704.0 1096.1,703.9 1098.0,699.8 1100.2,709.0 1102.5,706.9 1104.3,710.4 1106.2,710.0 1108.0,719.6 1109.8,714.3 1112.4,717.5 1115.0,711.7 1117.6,717.8 1120.2,722.4 1122.1,722.4 1124.1,720.1 1126.0,718.5 1129.6,728.7 1131.7,735.4 1133.7,735.5 1135.8,738.5 1137.8,743.3 1139.9,738.9 1141.9,743.1 1143.9,738.7 1146.0,742.8 1148.0,739.4 1150.0,743.0 1152.0,732.0 1154.3,746.3 1156.7,747.1 1158.8,749.4 1160.8,746.0 1162.9,747.1 1164.9,744.2 1167.0,741.8 1168.0,754.0 1170.1,761.3 1172.2,756.9 1174.3,764.9 1176.4,758.9 1178.5,762.0 1180.4,765.4 1182.3,764.4 1184.2,771.1 1186.1,768.4 1188.0,771.7 1190.0,775.0 1192.0,775.4 1194.0,783.4 1196.0,780.3 1198.0,783.4 1200.0,784.3 1202.2,793.5 1204.3,788.9 1206.5,793.8 1208.6,795.3 1210.8,798.3 1212.9,804.0 1214.9,807.2 1217.0,814.0 1212.0,826.0 1208.8,833.3 1207.7,852.0 1205.6,885.4 1200.4,893.8 1194.2,904.2 1189.0,914.6 1181.7,901.0 1168.0,890.6 1159.8,885.4 1144.2,881.2 1133.8,862.5 1123.3,861.5 1108.8,845.8 1099.4,838.5 1084.8,832.3 1079.6,827.0 1068.0,825.0 1068.0,806.2 1077.5,788.0 1080.6,772.5 1076.5,731.0 1074.4,710.0"/></clipPath><g clip-path="url(#cL)" stroke="#000" stroke-width="1" stroke-dasharray="4 2" opacity="0.85"><line x1="1068" y1="715.0" x2="1220" y2="785.0"/><line x1="1068" y1="740.0" x2="1220" y2="810.0"/><line x1="1068" y1="765.0" x2="1220" y2="835.0"/><line x1="1068" y1="790.0" x2="1220" y2="860.0"/><line x1="1068" y1="815.0" x2="1220" y2="885.0"/></g></svg><div class="t" style="left:1065.50px;top:604.44px;font-size:12.00px;color:#000;transform:scaleX(0.9926);transform-origin:0 0;">3750</div><div class="t" style="left:1105.60px;top:598.74px;font-size:12.00px;color:#000;transform:scaleX(0.9926);transform-origin:0 0;">3000</div><div class="t" style="left:1143.75px;top:592.64px;font-size:12.00px;color:#000;transform:scaleX(0.9926);transform-origin:0 0;">2250</div><div class="t" style="left:1178.00px;top:586.44px;font-size:12.00px;color:#000;transform:scaleX(0.9926);transform-origin:0 0;">1500</div><div class="t" style="left:1211.00px;top:582.34px;font-size:12.00px;color:#000;transform:scaleX(0.9724);transform-origin:0 0;">750 1/cm</div><div class="t" style="left:1223.40px;top:594.24px;font-size:12.00px;color:#000;transform:scaleX(0.9419);transform-origin:0 0;">37,5</div><div class="t" style="left:1246.90px;top:599.74px;font-size:12.00px;color:#000;transform:scaleX(0.9365);transform-origin:0 0;">30</div><div class="t" style="left:1272.90px;top:607.04px;font-size:12.00px;color:#000;transform:scaleX(0.9634);transform-origin:0 0;">22,5</div><div class="t" style="left:1301.60px;top:613.84px;font-size:12.00px;color:#000;transform:scaleX(0.9365);transform-origin:0 0;">15</div><div class="t" style="left:1333.30px;top:621.64px;font-size:12.00px;color:#000;transform:scaleX(0.9910);transform-origin:0 0;">7,5 min</div><div class="t" style="left:1362.50px;top:666.84px;font-size:12.00px;color:#000;transform:scaleX(0.9205);transform-origin:0 0;">0,61</div><div class="t" style="left:1358.90px;top:702.34px;font-size:12.00px;color:#000;transform:scaleX(0.9634);transform-origin:0 0;">0,46</div><div class="t" style="left:1355.70px;top:736.84px;font-size:12.00px;color:#000;transform:scaleX(0.8991);transform-origin:0 0;">0,31</div><div class="t" style="left:1352.60px;top:769.84px;font-size:12.00px;color:#000;transform:scaleX(0.9634);transform-origin:0 0;">0,16</div><div class="t" style="left:1348.40px;top:801.04px;font-size:12.00px;color:#000;">0,01 Abs</div>
<div class="b" style="left:1544.00px;top:23.00px;width:300.00px;height:27.00px;background:#98b1d1"></div><div class="t" style="left:1549.00px;top:29.84px;font-size:12.00px;color:#000;transform:scaleX(0.9351);transform-origin:0 0;">Parameters</div><svg class="b" style="left:1831px;top:30px" width="8" height="12"><g fill="none" stroke="#e8e8e8" stroke-width="1"><rect x="1.5" y="1.5" width="4" height="5"/><line x1="0" y1="6.5" x2="7" y2="6.5"/><line x1="3.5" y1="7" x2="3.5" y2="11"/></g></svg><div class="b" style="left:1545.00px;top:51.00px;width:46.00px;height:21.00px;background:#f4f4f4;border-left:1px solid #6a6a6a;border-top:1px solid #6a6a6a;box-sizing:border-box"></div><div class="t" style="left:1551.00px;top:55.84px;font-size:12.00px;color:#000;transform:scaleX(0.9692);transform-origin:0 0;">View</div><div class="t" style="left:1608.00px;top:54.84px;font-size:12.00px;color:#000;transform:scaleX(0.8994);transform-origin:0 0;">Phases</div><div class="t" style="left:1666.00px;top:54.84px;font-size:12.00px;color:#000;transform:scaleX(0.9512);transform-origin:0 0;">Parameters</div><div class="t" style="left:1748.00px;top:54.84px;font-size:12.00px;color:#000;transform:scaleX(1.0212);transform-origin:0 0;">Limits</div><div class="b" style="left:1596.00px;top:50.00px;width:1.00px;height:23.00px;background:#c4c4c4"></div><div class="b" style="left:1654.00px;top:50.00px;width:1.00px;height:23.00px;background:#c4c4c4"></div><div class="b" style="left:1735.00px;top:50.00px;width:1.00px;height:23.00px;background:#c4c4c4"></div><div class="t" style="left:1550.00px;top:80.84px;font-size:12.00px;color:#000;transform:scaleX(0.9552);transform-origin:0 0;">Preprocessings</div><div class="b" style="left:1639.00px;top:76.00px;width:1.00px;height:23.00px;background:#c4c4c4"></div><div class="b" style="left:1551.00px;top:106.00px;width:286.00px;height:1015.00px;background:#fff;border:1px solid #646464;box-sizing:border-box"></div><div class="b" style="left:1571.00px;top:108.00px;width:265.00px;height:17.00px;background:#c8effc"></div><div class="b" style="left:1569.00px;top:126.00px;width:267.00px;height:1.00px;background:#a6a6a6"></div><svg class="b" style="left:1556px;top:112px" width="10" height="10"><rect x="0.5" y="0.5" width="9" height="9" rx="1" fill="#fff" stroke="#8c8c8c" stroke-width="1"/><line x1="2" y1="5" x2="8" y2="5" stroke="#2d4aa0" stroke-width="1"/></svg><div class="t" style="left:1574.00px;top:110.84px;font-size:12.00px;color:#000;transform:scaleX(0.9761);transform-origin:0 0;">Sample Display Options</div><div class="b" style="left:1569.00px;top:146.00px;width:267.00px;height:1.00px;background:#a6a6a6"></div><div class="b" style="left:1757.00px;top:127.00px;width:1.00px;height:19.00px;background:#a6a6a6"></div><svg class="b" style="left:1575px;top:130px" width="13" height="13"><rect x="0" y="0" width="13" height="13" rx="2.5" fill="#0063c9"/><path d="M3 6.8 L5.3 9 L10 4.2" fill="none" stroke="#fff" stroke-width="1.2"/></svg><div class="t" style="left:1596.00px;top:130.84px;font-size:12.00px;color:#000;transform:scaleX(0.9663);transform-origin:0 0;">EveryNthSample</div><div class="t" style="left:1763.00px;top:130.84px;font-size:12.00px;color:#000;">2</div><div class="b" style="left:1569.00px;top:166.00px;width:267.00px;height:1.00px;background:#a6a6a6"></div><div class="b" style="left:1757.00px;top:147.00px;width:1.00px;height:19.00px;background:#a6a6a6"></div><svg class="b" style="left:1575px;top:150px" width="13" height="13"><rect x="0.5" y="0.5" width="12" height="12" rx="2.5" fill="#f7f7f7" stroke="#333" stroke-width="1"/></svg><div class="t" style="left:1596.00px;top:150.84px;font-size:12.00px;color:#6d6d6d;transform:scaleX(1.0347);transform-origin:0 0;">Moving Time Window</div><div class="t" style="left:1763.00px;top:150.84px;font-size:12.00px;color:#6d6d6d;">1 Minute</div><div class="b" style="left:1569.00px;top:186.00px;width:267.00px;height:1.00px;background:#a6a6a6"></div><div class="b" style="left:1757.00px;top:167.00px;width:1.00px;height:19.00px;background:#a6a6a6"></div><svg class="b" style="left:1575px;top:170px" width="13" height="13"><rect x="0.5" y="0.5" width="12" height="12" rx="2.5" fill="#f7f7f7" stroke="#333" stroke-width="1"/></svg><div class="t" style="left:1596.00px;top:170.84px;font-size:12.00px;color:#6d6d6d;transform:scaleX(0.9739);transform-origin:0 0;">LastNSamples</div><div class="t" style="left:1763.00px;top:170.84px;font-size:12.00px;color:#6d6d6d;">20</div><div class="b" style="left:1571.00px;top:188.00px;width:265.00px;height:17.00px;background:#c8effc"></div><div class="b" style="left:1565.00px;top:206.00px;width:271.00px;height:1.00px;background:#a6a6a6"></div><svg class="b" style="left:1556px;top:192px" width="10" height="10"><rect x="0.5" y="0.5" width="9" height="9" rx="1" fill="#fff" stroke="#8c8c8c" stroke-width="1"/><line x1="2" y1="5" x2="8" y2="5" stroke="#2d4aa0" stroke-width="1"/></svg><svg class="b" style="left:1571px;top:190px" width="13" height="13"><rect x="0" y="0" width="13" height="13" rx="2.5" fill="#0063c9"/><path d="M3 6.8 L5.3 9 L10 4.2" fill="none" stroke="#fff" stroke-width="1.2"/></svg><div class="t" style="left:1591.00px;top:190.84px;font-size:12.00px;color:#000;transform:scaleX(0.9767);transform-origin:0 0;">Show Trend View</div><div class="b" style="left:1569.00px;top:226.00px;width:267.00px;height:1.00px;background:#a6a6a6"></div><div class="b" style="left:1757.00px;top:207.00px;width:1.00px;height:19.00px;background:#a6a6a6"></div><div class="t" style="left:1574.00px;top:210.84px;font-size:12.00px;color:#000;transform:scaleX(1.0145);transform-origin:0 0;">TrendUnit</div><div class="t" style="left:1763.00px;top:210.84px;font-size:12.00px;color:#000;">Minute</div><div class="b" style="left:1584.00px;top:228.00px;width:252.00px;height:17.00px;background:#f0f0f0"></div><div class="b" style="left:1582.00px;top:246.00px;width:254.00px;height:1.00px;background:#a6a6a6"></div><svg class="b" style="left:1573px;top:232px" width="10" height="10"><rect x="0.5" y="0.5" width="9" height="9" rx="1" fill="#fff" stroke="#8c8c8c" stroke-width="1"/><line x1="2" y1="5" x2="8" y2="5" stroke="#2d4aa0" stroke-width="1"/><line x1="5" y1="2" x2="5" y2="8" stroke="#2d4aa0" stroke-width="1"/></svg><div class="t" style="left:1587.00px;top:230.84px;font-size:12.00px;color:#000;transform:scaleX(0.9636);transform-origin:0 0;">Intensity 1619</div><div class="b" style="left:1584.00px;top:248.00px;width:252.00px;height:17.00px;background:#f0f0f0"></div><div class="b" style="left:1582.00px;top:266.00px;width:254.00px;height:1.00px;background:#a6a6a6"></div><svg class="b" style="left:1573px;top:252px" width="10" height="10"><rect x="0.5" y="0.5" width="9" height="9" rx="1" fill="#fff" stroke="#8c8c8c" stroke-width="1"/><line x1="2" y1="5" x2="8" y2="5" stroke="#2d4aa0" stroke-width="1"/><line x1="5" y1="2" x2="5" y2="8" stroke="#2d4aa0" stroke-width="1"/></svg><div class="t" style="left:1587.00px;top:250.84px;font-size:12.00px;color:#000;transform:scaleX(0.9411);transform-origin:0 0;">Abs. Peak Area 1680-1725</div><div class="b" style="left:1584.00px;top:268.00px;width:252.00px;height:17.00px;background:#f0f0f0"></div><div class="b" style="left:1582.00px;top:286.00px;width:254.00px;height:1.00px;background:#a6a6a6"></div><svg class="b" style="left:1573px;top:272px" width="10" height="10"><rect x="0.5" y="0.5" width="9" height="9" rx="1" fill="#fff" stroke="#8c8c8c" stroke-width="1"/><line x1="2" y1="5" x2="8" y2="5" stroke="#2d4aa0" stroke-width="1"/><line x1="5" y1="2" x2="5" y2="8" stroke="#2d4aa0" stroke-width="1"/></svg><div class="t" style="left:1587.00px;top:270.84px;font-size:12.00px;color:#000;transform:scaleX(0.9411);transform-origin:0 0;">Abs. Peak Area 1650-1680</div><div class="b" style="left:1571.00px;top:288.00px;width:265.00px;height:17.00px;background:#c8effc"></div><div class="b" style="left:1565.00px;top:306.00px;width:271.00px;height:1.00px;background:#a6a6a6"></div><svg class="b" style="left:1556px;top:292px" width="10" height="10"><rect x="0.5" y="0.5" width="9" height="9" rx="1" fill="#fff" stroke="#8c8c8c" stroke-width="1"/><line x1="2" y1="5" x2="8" y2="5" stroke="#2d4aa0" stroke-width="1"/></svg><svg class="b" style="left:1571px;top:290px" width="13" height="13"><rect x="0" y="0" width="13" height="13" rx="2.5" fill="#0063c9"/><path d="M3 6.8 L5.3 9 L10 4.2" fill="none" stroke="#fff" stroke-width="1.2"/></svg><div class="t" style="left:1591.00px;top:290.84px;font-size:12.00px;color:#000;transform:scaleX(0.9632);transform-origin:0 0;">Show Overlay View</div><div class="b" style="left:1569.00px;top:326.00px;width:267.00px;height:1.00px;background:#a6a6a6"></div><div class="b" style="left:1757.00px;top:307.00px;width:1.00px;height:19.00px;background:#a6a6a6"></div><div class="t" style="left:1574.00px;top:310.84px;font-size:12.00px;color:#000;transform:scaleX(0.9677);transform-origin:0 0;">ShowFirstSample</div><svg class="b" style="left:1763px;top:310px" width="13" height="13"><rect x="0.5" y="0.5" width="12" height="12" rx="2.5" fill="#f7f7f7" stroke="#333" stroke-width="1"/></svg><div class="b" style="left:1569.00px;top:346.00px;width:267.00px;height:1.00px;background:#a6a6a6"></div><div class="b" style="left:1757.00px;top:327.00px;width:1.00px;height:19.00px;background:#a6a6a6"></div><div class="t" style="left:1574.00px;top:330.84px;font-size:12.00px;color:#000;transform:scaleX(0.9817);transform-origin:0 0;">ShowOutlierSamples</div><svg class="b" style="left:1763px;top:330px" width="13" height="13"><rect x="0" y="0" width="13" height="13" rx="2.5" fill="#0063c9"/><path d="M3 6.8 L5.3 9 L10 4.2" fill="none" stroke="#fff" stroke-width="1.2"/></svg><div class="b" style="left:1569.00px;top:366.00px;width:267.00px;height:1.00px;background:#a6a6a6"></div><div class="b" style="left:1757.00px;top:347.00px;width:1.00px;height:19.00px;background:#a6a6a6"></div><div class="t" style="left:1574.00px;top:350.84px;font-size:12.00px;color:#000;transform:scaleX(0.9582);transform-origin:0 0;">ShowSampleShape</div><svg class="b" style="left:1763px;top:350px" width="13" height="13"><rect x="0.5" y="0.5" width="12" height="12" rx="2.5" fill="#f7f7f7" stroke="#333" stroke-width="1"/></svg><div class="b" style="left:1571.00px;top:368.00px;width:265.00px;height:17.00px;background:#c8effc"></div><div class="b" style="left:1565.00px;top:386.00px;width:271.00px;height:1.00px;background:#a6a6a6"></div><svg class="b" style="left:1556px;top:372px" width="10" height="10"><rect x="0.5" y="0.5" width="9" height="9" rx="1" fill="#fff" stroke="#8c8c8c" stroke-width="1"/><line x1="2" y1="5" x2="8" y2="5" stroke="#2d4aa0" stroke-width="1"/></svg><svg class="b" style="left:1571px;top:370px" width="13" height="13"><rect x="0" y="0" width="13" height="13" rx="2.5" fill="#0063c9"/><path d="M3 6.8 L5.3 9 L10 4.2" fill="none" stroke="#fff" stroke-width="1.2"/></svg><div class="t" style="left:1591.00px;top:370.84px;font-size:12.00px;color:#000;transform:scaleX(0.9509);transform-origin:0 0;">Show 3D View</div><div class="b" style="left:1569.00px;top:406.00px;width:267.00px;height:1.00px;background:#a6a6a6"></div><div class="b" style="left:1757.00px;top:387.00px;width:1.00px;height:19.00px;background:#a6a6a6"></div><div class="b" style="left:1572.00px;top:388.00px;width:185.00px;height:17.00px;background:#b4b4b4"></div><div class="t" style="left:1574.00px;top:390.84px;font-size:12.00px;color:#000;transform:scaleX(0.9838);transform-origin:0 0;">View3DMode</div><div class="b" style="left:1759px;top:387px;width:57px;height:18px;overflow:hidden"><div class="t" style="left:4.00px;top:3.84px;font-size:12.00px;color:#000;">Perspective</div></div><svg class="b" style="left:1817px;top:388px" width="18" height="18"><rect x="0.5" y="0.5" width="17" height="17" fill="#fafafa" stroke="#e0e0e0"/><path d="M5 7.5 L9 11 L13 7.5" fill="none" stroke="#444" stroke-width="1"/></svg><div class="b" style="left:1571.00px;top:408.00px;width:265.00px;height:17.00px;background:#c8effc"></div><div class="b" style="left:1565.00px;top:426.00px;width:271.00px;height:1.00px;background:#a6a6a6"></div><svg class="b" style="left:1556px;top:412px" width="10" height="10"><rect x="0.5" y="0.5" width="9" height="9" rx="1" fill="#fff" stroke="#8c8c8c" stroke-width="1"/><line x1="2" y1="5" x2="8" y2="5" stroke="#2d4aa0" stroke-width="1"/></svg><svg class="b" style="left:1571px;top:410px" width="13" height="13"><rect x="0" y="0" width="13" height="13" rx="2.5" fill="#0063c9"/><path d="M3 6.8 L5.3 9 L10 4.2" fill="none" stroke="#fff" stroke-width="1.2"/></svg><div class="t" style="left:1591.00px;top:410.84px;font-size:12.00px;color:#000;transform:scaleX(0.9645);transform-origin:0 0;">Show Report View</div><div class="b" style="left:1569.00px;top:446.00px;width:267.00px;height:1.00px;background:#a6a6a6"></div><div class="b" style="left:1757.00px;top:427.00px;width:1.00px;height:19.00px;background:#a6a6a6"></div><div class="t" style="left:1574.00px;top:430.84px;font-size:12.00px;color:#000;">NumberOfDisplayedDecimals</div><div class="t" style="left:1763.00px;top:430.84px;font-size:12.00px;color:#000;">3</div><div class="b" style="left:1569.00px;top:466.00px;width:267.00px;height:1.00px;background:#a6a6a6"></div><div class="b" style="left:1757.00px;top:447.00px;width:1.00px;height:19.00px;background:#a6a6a6"></div><div class="t" style="left:1574.00px;top:450.84px;font-size:12.00px;color:#000;transform:scaleX(0.9865);transform-origin:0 0;">ShowMeasurementDate</div><svg class="b" style="left:1763px;top:450px" width="13" height="13"><rect x="0.5" y="0.5" width="12" height="12" rx="2.5" fill="#f7f7f7" stroke="#333" stroke-width="1"/></svg><div class="b" style="left:1569.00px;top:486.00px;width:267.00px;height:1.00px;background:#a6a6a6"></div><div class="b" style="left:1757.00px;top:467.00px;width:1.00px;height:19.00px;background:#a6a6a6"></div><div class="t" style="left:1574.00px;top:470.84px;font-size:12.00px;color:#000;transform:scaleX(0.9658);transform-origin:0 0;">ShowSampleNames</div><svg class="b" style="left:1763px;top:470px" width="13" height="13"><rect x="0.5" y="0.5" width="12" height="12" rx="2.5" fill="#f7f7f7" stroke="#333" stroke-width="1"/></svg><div class="b" style="left:1569.00px;top:506.00px;width:267.00px;height:1.00px;background:#a6a6a6"></div><div class="b" style="left:1757.00px;top:487.00px;width:1.00px;height:19.00px;background:#a6a6a6"></div><div class="t" style="left:1574.00px;top:490.84px;font-size:12.00px;color:#000;transform:scaleX(0.9833);transform-origin:0 0;">ShowPhaseInformation</div><svg class="b" style="left:1763px;top:490px" width="13" height="13"><rect x="0.5" y="0.5" width="12" height="12" rx="2.5" fill="#f7f7f7" stroke="#333" stroke-width="1"/></svg><div class="b" style="left:1569.00px;top:526.00px;width:267.00px;height:1.00px;background:#a6a6a6"></div><div class="b" style="left:1757.00px;top:507.00px;width:1.00px;height:19.00px;background:#a6a6a6"></div><div class="t" style="left:1574.00px;top:510.84px;font-size:12.00px;color:#000;transform:scaleX(1.0337);transform-origin:0 0;">ShowComments</div><svg class="b" style="left:1763px;top:510px" width="13" height="13"><rect x="0.5" y="0.5" width="12" height="12" rx="2.5" fill="#f7f7f7" stroke="#333" stroke-width="1"/></svg><div class="b" style="left:1571.00px;top:528.00px;width:265.00px;height:17.00px;background:#c8effc"></div><div class="b" style="left:1565.00px;top:546.00px;width:271.00px;height:1.00px;background:#a6a6a6"></div><svg class="b" style="left:1556px;top:532px" width="10" height="10"><rect x="0.5" y="0.5" width="9" height="9" rx="1" fill="#fff" stroke="#8c8c8c" stroke-width="1"/><line x1="2" y1="5" x2="8" y2="5" stroke="#2d4aa0" stroke-width="1"/><line x1="5" y1="2" x2="5" y2="8" stroke="#2d4aa0" stroke-width="1"/></svg><svg class="b" style="left:1571px;top:530px" width="13" height="13"><rect x="0" y="0" width="13" height="13" rx="2.5" fill="#0063c9"/><path d="M3 6.8 L5.3 9 L10 4.2" fill="none" stroke="#fff" stroke-width="1.2"/></svg><div class="t" style="left:1591.00px;top:530.84px;font-size:12.00px;color:#000;">Show Trend Monitor View</div><div class="b" style="left:1571.00px;top:548.00px;width:265.00px;height:17.00px;background:#c8effc"></div><div class="b" style="left:1565.00px;top:566.00px;width:271.00px;height:1.00px;background:#a6a6a6"></div><svg class="b" style="left:1556px;top:552px" width="10" height="10"><rect x="0.5" y="0.5" width="9" height="9" rx="1" fill="#fff" stroke="#8c8c8c" stroke-width="1"/><line x1="2" y1="5" x2="8" y2="5" stroke="#2d4aa0" stroke-width="1"/><line x1="5" y1="2" x2="5" y2="8" stroke="#2d4aa0" stroke-width="1"/></svg><svg class="b" style="left:1571px;top:550px" width="13" height="13"><rect x="0.5" y="0.5" width="12" height="12" rx="2.5" fill="#f7f7f7" stroke="#333" stroke-width="1"/></svg><div class="t" style="left:1591.00px;top:550.84px;font-size:12.00px;color:#000;transform:scaleX(0.9697);transform-origin:0 0;">Show Log View</div><div class="b" style="left:1571.00px;top:568.00px;width:265.00px;height:17.00px;background:#c8effc"></div><div class="b" style="left:1565.00px;top:586.00px;width:271.00px;height:1.00px;background:#a6a6a6"></div><svg class="b" style="left:1556px;top:572px" width="10" height="10"><rect x="0.5" y="0.5" width="9" height="9" rx="1" fill="#fff" stroke="#8c8c8c" stroke-width="1"/><line x1="2" y1="5" x2="8" y2="5" stroke="#2d4aa0" stroke-width="1"/></svg><svg class="b" style="left:1571px;top:570px" width="13" height="13"><rect x="0.5" y="0.5" width="12" height="12" rx="2.5" fill="#f7f7f7" stroke="#333" stroke-width="1"/></svg><div class="t" style="left:1591.00px;top:570.84px;font-size:12.00px;color:#000;transform:scaleX(0.9541);transform-origin:0 0;">Enable View Layout</div><div class="t" style="left:1736.00px;top:590.84px;font-size:12.00px;color:#6d6d6d;transform:scaleX(0.9515);transform-origin:0 0;">Reset View Layout</div><div class="b" style="left:1736.00px;top:603.00px;width:95.00px;height:1.00px;background:#8a8a8a"></div><div class="b" style="left:1733.00px;top:608.00px;width:103.00px;height:1.00px;background:#a6a6a6"></div>
<div class="t" style="left:1850.00px;top:29.84px;font-size:12.00px;color:#000;transform:scaleX(1.0081);transform-origin:0 0;">Control</div><div class="b" style="left:1853px;top:54.5px;width:75px;height:52px;background:#fcfcfc;border:1px solid #cfcfcf;border-radius:4px;box-sizing:border-box"></div><div class="b" style="left:1853px;top:115.5px;width:75px;height:52px;background:#fcfcfc;border:1px solid #0a64c8;border-radius:4px;box-sizing:border-box"></div><div class="b" style="left:1853px;top:176.5px;width:75px;height:52px;background:#fcfcfc;border:1px solid #cfcfcf;border-radius:4px;box-sizing:border-box"></div><div class="b" style="left:1853px;top:237.5px;width:75px;height:52px;background:#fcfcfc;border:1px solid #cfcfcf;border-radius:4px;box-sizing:border-box"></div><div class="b" style="left:1853px;top:298.5px;width:75px;height:52px;background:#fcfcfc;border:1px solid #cfcfcf;border-radius:4px;box-sizing:border-box"></div><div class="b" style="left:1853px;top:359.5px;width:75px;height:52px;background:#fcfcfc;border:1px solid #cfcfcf;border-radius:4px;box-sizing:border-box"></div><div class="b" style="left:1853px;top:420.5px;width:75px;height:52px;background:#fcfcfc;border:1px solid #cfcfcf;border-radius:4px;box-sizing:border-box"></div><div class="b" style="left:1853px;top:481.5px;width:75px;height:52px;background:#fcfcfc;border:1px solid #cfcfcf;border-radius:4px;box-sizing:border-box"></div><div class="b" style="left:1853px;top:542.5px;width:75px;height:52px;background:#fcfcfc;border:1px solid #cfcfcf;border-radius:4px;box-sizing:border-box"></div><svg class="b" style="left:1853px;top:54px" width="67" height="545" viewBox="1853 54 67 545"><defs><linearGradient id="gplay" x1="0" y1="1" x2="1" y2="0"><stop offset="0" stop-color="#43b74a"/><stop offset="1" stop-color="#52dc56"/></linearGradient><linearGradient id="gbrief" x1="0" y1="0" x2="0" y2="1"><stop offset="0" stop-color="#d7774a"/><stop offset="1" stop-color="#a65029"/></linearGradient><linearGradient id="ghome" x1="0" y1="0" x2="1" y2="1"><stop offset="0" stop-color="#5aa0ff"/><stop offset="1" stop-color="#3f66e8"/></linearGradient></defs><circle cx="1887" cy="80.5" r="16" fill="url(#gplay)"/><path d="M1881 72.5 L1881 88.5 Q1881 90.5 1883 89.5 L1896 80.5 L1883 71.5 Q1881 70.5 1881 72.5 Z" fill="#fff"/><rect x="1879" y="128.5" width="16" height="10" fill="none" stroke="#4a7af0" stroke-width="1.5"/><rect x="1870" y="136.5" width="34" height="17" rx="3" fill="#151515"/><rect x="1874" y="136.5" width="26" height="15" fill="#4f86f2"/><rect x="1878" y="142.5" width="18" height="4" rx="1" fill="#141414"/><rect x="1878" y="145.5" width="18" height="11" rx="1" fill="#f2f2f2" stroke="#4f86f2" stroke-width="1"/><rect x="1901" y="147.5" width="2" height="2" fill="#e53030"/><g transform="translate(1871.0 186.5) scale(1.000)"><path d="M2 0 H27 L32 5 V30 a2 2 0 0 1 -2 2 H2 a2 2 0 0 1 -2 -2 V2 a2 2 0 0 1 2 -2Z" fill="#2b2b2b"/><rect x="6" y="1.5" width="18" height="10" rx="1" fill="#d0d4e6"/><rect x="18" y="3" width="3.5" height="7" fill="#222"/><rect x="4" y="15" width="24" height="15" fill="#fff"/><rect x="4" y="15" width="24" height="3" fill="#5b8cf0"/></g><rect x="1880" y="247" width="10" height="6" rx="1" fill="none" stroke="#3a2a20" stroke-width="1.6"/><rect x="1870" y="252" width="34" height="23" rx="3" fill="url(#gbrief)"/><rect x="1876" y="261" width="3" height="5" fill="#3a2a20"/><g transform="translate(1885.0 259.0) scale(0.620)"><path d="M2 0 H27 L32 5 V30 a2 2 0 0 1 -2 2 H2 a2 2 0 0 1 -2 -2 V2 a2 2 0 0 1 2 -2Z" fill="#2b2b2b"/><rect x="6" y="1.5" width="18" height="10" rx="1" fill="#d0d4e6"/><rect x="18" y="3" width="3.5" height="7" fill="#222"/><rect x="4" y="15" width="24" height="15" fill="#fff"/><rect x="4" y="15" width="24" height="3" fill="#5b8cf0"/></g><path d="M1871 310 h10 l3 3 h20 v22 h-34 z" fill="#f9b90f"/><rect x="1871" y="316" width="33" height="20" rx="1" fill="#ffcc2a"/><g transform="translate(1885.0 320.0) scale(0.620)"><path d="M2 0 H27 L32 5 V30 a2 2 0 0 1 -2 2 H2 a2 2 0 0 1 -2 -2 V2 a2 2 0 0 1 2 -2Z" fill="#2b2b2b"/><rect x="6" y="1.5" width="18" height="10" rx="1" fill="#d0d4e6"/><rect x="18" y="3" width="3.5" height="7" fill="#222"/><rect x="4" y="15" width="24" height="15" fill="#fff"/><rect x="4" y="15" width="24" height="3" fill="#5b8cf0"/></g><path d="M1887.3 369.5 L1902 385 Q1903 387 1900 387 L1898.8 387 L1898.8 399 Q1898.8 400.8 1897 400.8 L1891.5 400.8 L1891.5 391 Q1891.5 389 1889.5 389 L1885 389 Q1883 389 1883 391 L1883 400.8 L1876.6 400.8 Q1874.8 400.8 1874.8 399 L1874.8 387 L1873.6 387 Q1870.6 387 1872.6 385 Z" fill="url(#ghome)"/><rect x="1893.5" y="371.5" width="4.2" height="8" rx="1" fill="#5a8cff"/><path d="M1874.5 430.8 H1899.7 Q1902.9 430.8 1902.9 434 V452.6 Q1902.9 455.8 1899.7 455.8 H1880 L1875.5 461.5 Q1874 463 1874 461 V455.8 Q1871.25 455.8 1871.25 452.6 V434 Q1871.25 430.8 1874.5 430.8 Z" fill="url(#ghome)"/><rect x="1878" y="437" width="12" height="2.2" rx="1" fill="#fff"/><rect x="1878" y="444.3" width="18.7" height="2.2" rx="1" fill="#fff"/><path d="M1871.5 492.5 H1878 Q1884 492.5 1887 500 Q1890 508 1897 515 M1871.5 516 H1878 Q1884 516 1887 508 Q1891 492.5 1899 492.5 H1903" fill="none" stroke="#a9a9a9" stroke-width="2.6"/><circle cx="1893.5" cy="513" r="9.4" fill="#9a9a9a"/><path d="M1889.8 509.3 L1897.2 516.7 M1897.2 509.3 L1889.8 516.7" stroke="#fff" stroke-width="2"/><path d="M1871.5 553 H1878 Q1884 553 1887 561 Q1891 570 1896 574 Q1900 578 1903 578.5" fill="none" stroke="#3d6ff5" stroke-width="2.6"/><path d="M1871.5 577.5 H1878 Q1884 577.5 1887 569 Q1891 554 1899 554 H1903" fill="none" stroke="#3ec247" stroke-width="2.6"/><circle cx="1893.5" cy="574.6" r="9.4" fill="#3ec247"/><path d="M1893.5 569.4 V579.8 M1888.3 574.6 H1898.7" stroke="#fff" stroke-width="2.2"/></svg>
<div class="t" style="left:3.00px;top:935.84px;font-size:12.00px;color:#000;">Trend</div><div class="t" style="left:1011.50px;top:935.84px;font-size:12.00px;color:#000;transform:scaleX(0.9731);transform-origin:0 0;">Value</div><div class="t" style="left:1394.00px;top:935.84px;font-size:12.00px;color:#000;">Status</div><div class="b" style="left:4.00px;top:955.00px;width:762.00px;height:52.00px;background:#f0f0f0;border-top:1px solid #fcfcfc;border-left:1px solid #fcfcfc;border-bottom:2px solid #a0a0a0;border-right:1px solid #c8c8c8;box-sizing:border-box"></div><div class="b" style="left:774.00px;top:955.00px;width:505.00px;height:52.00px;background:#daa520;border-top:1px solid #fcfcfc;border-left:1px solid #fcfcfc;border-bottom:2px solid #a0a0a0;border-right:1px solid #c8c8c8;box-sizing:border-box"></div><div class="b" style="left:1286.00px;top:955.00px;width:251.00px;height:52.00px;background:#f0f0f0;border-top:1px solid #fcfcfc;border-left:1px solid #fcfcfc;border-bottom:2px solid #a0a0a0;border-right:1px solid #c8c8c8;box-sizing:border-box"></div><div class="t" style="left:5.00px;top:958.75px;font-size:44.00px;color:#000;transform:scaleX(0.9837);transform-origin:0 0;">Intensity 1619</div><div class="t" style="left:985.25px;top:958.75px;font-size:44.00px;color:#000;transform:scaleX(0.9517);transform-origin:0 0;">0,34</div><div class="b" style="left:4.00px;top:1014.00px;width:762.00px;height:52.00px;background:#f0f0f0;border-top:1px solid #fcfcfc;border-left:1px solid #fcfcfc;border-bottom:2px solid #a0a0a0;border-right:1px solid #c8c8c8;box-sizing:border-box"></div><div class="b" style="left:774.00px;top:1014.00px;width:505.00px;height:52.00px;background:#f0f0f0;border-top:1px solid #fcfcfc;border-left:1px solid #fcfcfc;border-bottom:2px solid #a0a0a0;border-right:1px solid #c8c8c8;box-sizing:border-box"></div><div class="b" style="left:1286.00px;top:1014.00px;width:251.00px;height:52.00px;background:#f0f0f0;border-top:1px solid #fcfcfc;border-left:1px solid #fcfcfc;border-bottom:2px solid #a0a0a0;border-right:1px solid #c8c8c8;box-sizing:border-box"></div><div class="t" style="left:9.40px;top:1017.75px;font-size:44.00px;color:#000;transform:scaleX(0.9784);transform-origin:0 0;">Abs. Peak Area 1680-1725</div><div class="t" style="left:985.25px;top:1017.75px;font-size:44.00px;color:#000;transform:scaleX(0.9517);transform-origin:0 0;">0,46</div><div class="b" style="left:4.00px;top:1073.00px;width:762.00px;height:52.00px;background:#f0f0f0;border-top:1px solid #fcfcfc;border-left:1px solid #fcfcfc;border-bottom:2px solid #a0a0a0;border-right:1px solid #c8c8c8;box-sizing:border-box"></div><div class="b" style="left:774.00px;top:1073.00px;width:505.00px;height:52.00px;background:#f0f0f0;border-top:1px solid #fcfcfc;border-left:1px solid #fcfcfc;border-bottom:2px solid #a0a0a0;border-right:1px solid #c8c8c8;box-sizing:border-box"></div><div class="b" style="left:1286.00px;top:1073.00px;width:251.00px;height:52.00px;background:#f0f0f0;border-top:1px solid #fcfcfc;border-left:1px solid #fcfcfc;border-bottom:2px solid #a0a0a0;border-right:1px solid #c8c8c8;box-sizing:border-box"></div><div class="t" style="left:9.40px;top:1076.75px;font-size:44.00px;color:#000;transform:scaleX(0.9784);transform-origin:0 0;">Abs. Peak Area 1650-1680</div><div class="t" style="left:974.00px;top:1076.75px;font-size:44.00px;color:#000;transform:scaleX(0.9445);transform-origin:0 0;">12,24</div><svg class="b" style="left:1396px;top:966px" width="32" height="30"><path d="M15.5 1 L30 29 L1 29 Z" fill="#000"/></svg>
<div class="b" style="left:0.00px;top:1128.00px;width:1920.00px;height:1.00px;background:#d9d9d9"></div><div class="b" style="left:0.00px;top:1129.00px;width:1920.00px;height:1.00px;background:#fafafa"></div><div class="t" style="left:3.00px;top:1133.73px;font-size:14.50px;color:#000;transform:scaleX(1.0998);transform-origin:0 0;">Cancellation request detected</div><div class="b" style="left:1558.00px;top:1131.00px;width:1.00px;height:20.00px;background:#d4d4d4"></div><div class="b" style="left:1568.00px;top:1131.00px;width:1.00px;height:20.00px;background:#d4d4d4"></div><div class="b" style="left:1578.00px;top:1131.00px;width:1.00px;height:20.00px;background:#d4d4d4"></div><div class="b" style="left:1667.00px;top:1131.00px;width:1.00px;height:20.00px;background:#d4d4d4"></div><div class="b" style="left:1677.00px;top:1131.00px;width:1.00px;height:20.00px;background:#d4d4d4"></div><div class="b" style="left:1752.00px;top:1131.00px;width:1.00px;height:20.00px;background:#d4d4d4"></div><div class="t" style="left:1583.00px;top:1133.46px;font-size:16.00px;color:#000;transform:scaleX(0.9697);transform-origin:0 0;">Phases: 1</div><div class="t" style="left:1682.00px;top:1133.46px;font-size:16.00px;color:#000;">Endless</div><div class="b" style="left:1756.00px;top:1131.00px;width:146.00px;height:19.00px;background:#e6e6e6;border:1px solid #bcbcbc;box-sizing:border-box"></div><svg class="b" style="left:1905px;top:1138px" width="12" height="12"><g fill="#b8b8b8"><rect x="8" y="2" width="2" height="2"/><rect x="5" y="5" width="2" height="2"/><rect x="8" y="5" width="2" height="2"/><rect x="2" y="8" width="2" height="2"/><rect x="5" y="8" width="2" height="2"/><rect x="8" y="8" width="2" height="2"/></g></svg>
</body></html>
